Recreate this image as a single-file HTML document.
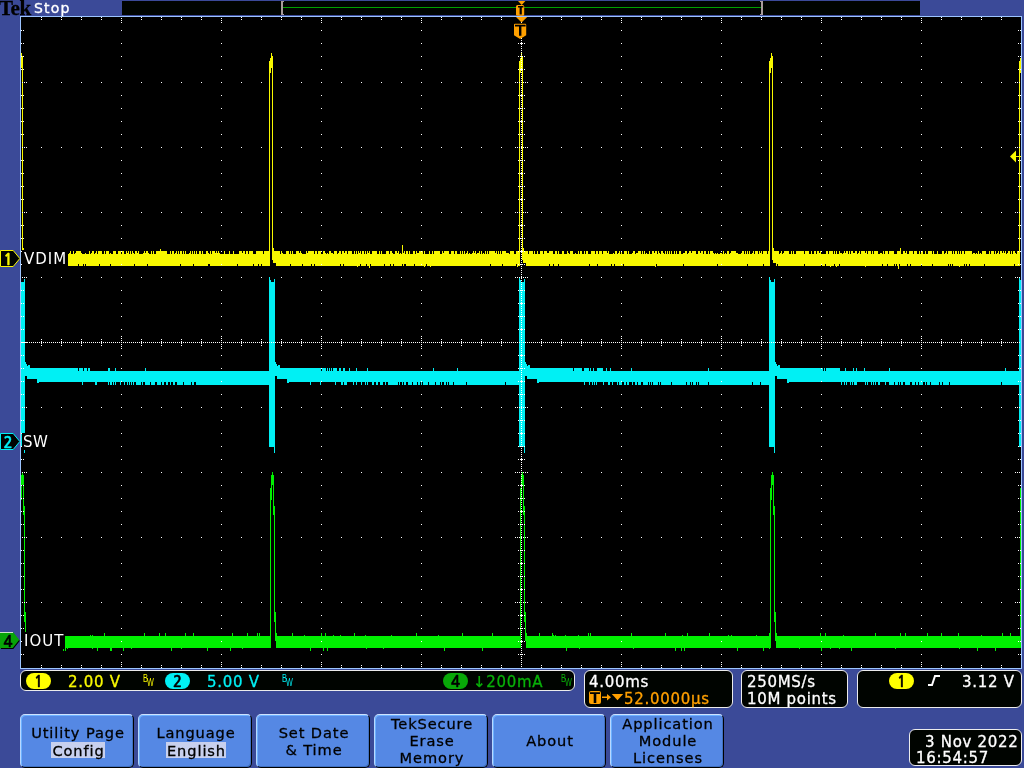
<!DOCTYPE html>
<html lang="en"><head><meta charset="utf-8"><title>Tek scope</title>
<style>
*{box-sizing:border-box;margin:0;padding:0}
html,body{width:1024px;height:768px;overflow:hidden;background:#3b4a98}
body{position:relative;font-family:"DejaVu Sans","Liberation Sans",sans-serif;font-size:15px;line-height:17px;color:#fff}
.abs{position:absolute}
#ov{position:absolute;left:0;top:0;width:1024px;height:768px;will-change:transform;transform:translateZ(0)}
#scr{position:absolute;left:0;top:0;width:1024px;height:768px}
.t{position:absolute;white-space:nowrap;letter-spacing:1px}
.lbl{position:absolute;background:#000;color:#fff;height:17px;line-height:17px;letter-spacing:1px;white-space:nowrap}
.box{position:absolute;background:#000400;border:1px solid #ececec;border-radius:6px}
.btn{position:absolute;top:714px;width:114px;height:54px;background:#5588e4;border-radius:5px;
 border-top:1px solid #cfe3ff;border-left:1px solid #b8d8ff;border-right:1px solid #000;border-bottom:1px solid #000;
 box-shadow:inset 1px 1px 0 #6cb0ff,inset -1px -1px 0 #4070c0;
 color:#000;text-align:center;font-size:14.6px;letter-spacing:0.9px;padding-left:2px;line-height:17px;white-space:nowrap;-webkit-text-stroke:0.3px #000}
.btn span{display:block}
.btn .hl{display:inline-block;font-weight:normal;background:#c8d0ee;padding:0 0 0 1px;height:16px;line-height:17px;margin-top:1px;vertical-align:top}
.r{line-height:13px;height:13px;letter-spacing:0.7px;-webkit-text-stroke:0.3px}
.mk{-webkit-text-stroke:0.4px;width:14px;text-align:center;letter-spacing:0;font-family:'NanumGothic','Liberation Sans',sans-serif;font-weight:bold;font-size:15px}
.pill{-webkit-text-stroke:0.4px #000;position:absolute;width:25px;height:16px;border-radius:8px;color:#000;text-align:center;line-height:17px;font-size:15px;letter-spacing:0;font-family:'NanumGothic','Liberation Sans',sans-serif;font-weight:bold}
</style></head><body>
<svg id="scr" width="1024" height="768" viewBox="0 0 1024 768" shape-rendering="crispEdges">
<rect x="122" y="1" width="798" height="14" fill="#000400"/>
<rect x="283" y="7" width="478" height="1" fill="#00a000"/>
<path fill="#a89c9c" d="M281 1h3v1h-1v12h1v1h-3z"/>
<path fill="#a89c9c" d="M763 1h-3v1h1v12h-1v1h3z"/>
<rect x="20" y="16" width="1002" height="653" fill="#9cc4ff"/>
<rect x="21" y="17" width="1000" height="651" fill="#000"/>
<path fill="#f8f800" d="M21 53h1v15h-1zM22 56h1v204h-1zM23 248h1v15h-1zM24 251h2v12h-2zM26 254h1v12h-1zM27 253h1v13h-1zM28 254h1v12h-1zM29 251h2v15h-2zM31 251h1v13h-1zM32 251h1v15h-1zM33 254h3v12h-3zM36 251h1v15h-1zM37 251h1v13h-1zM38 254h1v12h-1zM39 251h1v15h-1zM40 254h1v12h-1zM41 251h2v15h-2zM43 254h1v12h-1zM44 251h3v15h-3zM47 253h1v13h-1zM48 254h2v12h-2zM50 251h6v15h-6zM56 254h1v12h-1zM57 251h2v15h-2zM59 253h1v13h-1zM60 254h4v12h-4zM64 253h1v13h-1zM65 254h1v12h-1zM66 251h2v15h-2zM68 254h1v12h-1zM69 253h1v13h-1zM70 251h1v15h-1zM71 254h2v12h-2zM73 251h1v15h-1zM74 254h1v12h-1zM75 253h1v13h-1zM76 251h2v15h-2zM78 251h1v13h-1zM79 251h2v15h-2zM81 253h1v13h-1zM82 254h1v12h-1zM83 254h1v10h-1zM84 254h1v12h-1zM85 253h1v11h-1zM86 254h3v12h-3zM89 251h1v15h-1zM90 254h1v12h-1zM91 253h1v13h-1zM92 251h2v15h-2zM94 254h1v12h-1zM95 253h1v13h-1zM96 251h1v15h-1zM97 254h1v12h-1zM98 251h1v15h-1zM99 251h1v13h-1zM100 251h2v15h-2zM102 254h2v12h-2zM104 251h1v15h-1zM105 254h1v12h-1zM106 251h3v15h-3zM109 254h1v12h-1zM110 253h1v11h-1zM111 254h2v12h-2zM113 251h3v15h-3zM116 254h2v12h-2zM118 251h3v15h-3zM121 254h1v12h-1zM122 251h2v15h-2zM124 254h2v12h-2zM126 251h1v15h-1zM127 253h1v13h-1zM128 251h1v15h-1zM129 254h1v12h-1zM130 251h1v15h-1zM131 254h1v12h-1zM132 251h1v15h-1zM133 253h1v13h-1zM134 254h1v10h-1zM135 251h2v15h-2zM137 253h1v13h-1zM138 251h1v15h-1zM139 254h4v12h-4zM143 253h1v13h-1zM144 251h1v15h-1zM145 253h1v13h-1zM146 251h1v15h-1zM147 251h1v13h-1zM148 253h1v13h-1zM149 254h2v12h-2zM151 251h1v15h-1zM152 254h1v12h-1zM153 251h1v15h-1zM154 254h2v12h-2zM156 251h4v15h-4zM160 249h1v17h-1zM161 251h6v15h-6zM167 254h3v12h-3zM170 251h1v15h-1zM171 254h1v12h-1zM172 251h2v15h-2zM174 254h1v12h-1zM175 253h1v13h-1zM176 251h1v15h-1zM177 254h1v12h-1zM178 251h1v15h-1zM179 254h1v12h-1zM180 251h1v13h-1zM181 251h1v15h-1zM182 254h1v12h-1zM183 251h1v15h-1zM184 254h1v12h-1zM185 251h1v15h-1zM186 254h3v12h-3zM189 253h1v13h-1zM190 251h1v15h-1zM191 254h1v12h-1zM192 251h1v15h-1zM193 254h1v10h-1zM194 251h1v15h-1zM195 254h1v12h-1zM196 251h1v15h-1zM197 254h2v12h-2zM199 251h2v15h-2zM201 254h1v12h-1zM202 251h1v15h-1zM203 254h3v12h-3zM206 251h2v15h-2zM208 253h1v11h-1zM209 254h1v10h-1zM210 251h1v15h-1zM211 254h1v12h-1zM212 251h3v15h-3zM215 253h1v13h-1zM216 251h1v15h-1zM217 253h1v13h-1zM218 251h1v15h-1zM219 253h1v13h-1zM220 254h4v12h-4zM224 251h1v15h-1zM225 254h4v12h-4zM229 251h1v15h-1zM230 254h3v12h-3zM233 251h1v15h-1zM234 254h3v12h-3zM237 254h1v10h-1zM238 254h1v12h-1zM239 251h3v15h-3zM242 253h1v13h-1zM243 251h2v15h-2zM245 254h1v12h-1zM246 251h2v15h-2zM248 254h1v12h-1zM249 251h4v15h-4zM253 254h1v10h-1zM254 254h2v12h-2zM256 251h2v15h-2zM258 251h1v13h-1zM259 251h2v15h-2zM261 251h1v13h-1zM262 251h1v15h-1zM263 254h1v12h-1zM264 251h5v15h-5zM269 61h1v205h-1zM270 58h1v15h-1zM271 53h1v15h-1zM272 56h1v204h-1zM273 248h1v15h-1zM274 251h2v12h-2zM276 251h4v15h-4zM280 254h1v12h-1zM281 251h1v15h-1zM282 253h1v13h-1zM283 254h3v12h-3zM286 251h3v15h-3zM289 254h1v12h-1zM290 251h1v13h-1zM291 254h1v12h-1zM292 251h1v15h-1zM293 254h3v12h-3zM296 251h3v15h-3zM299 253h1v13h-1zM300 251h1v15h-1zM301 253h1v13h-1zM302 254h1v10h-1zM303 254h3v12h-3zM306 251h1v15h-1zM307 253h1v13h-1zM308 251h3v15h-3zM311 251h1v13h-1zM312 251h2v15h-2zM314 254h1v10h-1zM315 251h2v15h-2zM317 254h1v12h-1zM318 251h3v15h-3zM321 254h2v12h-2zM323 251h2v15h-2zM325 253h1v13h-1zM326 254h1v12h-1zM327 253h1v13h-1zM328 254h1v12h-1zM329 251h2v15h-2zM331 253h2v13h-2zM333 254h1v12h-1zM334 251h3v15h-3zM337 254h1v12h-1zM338 253h1v13h-1zM339 251h1v15h-1zM340 251h1v13h-1zM341 254h1v12h-1zM342 251h1v15h-1zM343 251h1v13h-1zM344 253h1v13h-1zM345 251h2v15h-2zM347 254h1v12h-1zM348 251h4v15h-4zM352 254h2v12h-2zM354 251h1v15h-1zM355 254h1v12h-1zM356 251h1v15h-1zM357 254h1v13h-1zM358 251h1v15h-1zM359 253h1v13h-1zM360 251h1v13h-1zM361 254h1v12h-1zM362 251h2v15h-2zM364 254h1v12h-1zM365 251h1v15h-1zM366 254h1v10h-1zM367 251h1v15h-1zM368 253h1v13h-1zM369 251h1v17h-1zM370 254h1v10h-1zM371 254h1v12h-1zM372 251h5v15h-5zM377 254h2v12h-2zM379 251h1v15h-1zM380 254h1v12h-1zM381 251h1v15h-1zM382 254h2v12h-2zM384 254h1v10h-1zM385 254h1v12h-1zM386 251h3v15h-3zM389 254h1v12h-1zM390 251h1v13h-1zM391 251h1v15h-1zM392 253h1v13h-1zM393 254h1v10h-1zM394 254h1v12h-1zM395 251h2v15h-2zM397 253h1v13h-1zM398 251h1v15h-1zM399 254h1v12h-1zM400 253h1v13h-1zM401 254h1v12h-1zM402 245h1v19h-1zM403 253h1v13h-1zM404 251h1v13h-1zM405 254h1v10h-1zM406 251h2v15h-2zM408 254h1v12h-1zM409 251h1v15h-1zM410 254h3v12h-3zM413 251h1v15h-1zM414 251h1v13h-1zM415 254h1v12h-1zM416 251h1v15h-1zM417 253h2v13h-2zM419 251h4v15h-4zM423 254h1v12h-1zM424 251h1v16h-1zM425 254h1v12h-1zM426 254h1v10h-1zM427 254h2v12h-2zM429 251h1v15h-1zM430 254h1v13h-1zM431 254h1v12h-1zM432 251h1v15h-1zM433 254h1v12h-1zM434 251h6v15h-6zM440 254h2v12h-2zM442 251h1v15h-1zM443 253h1v13h-1zM444 251h5v15h-5zM449 254h2v12h-2zM451 251h3v15h-3zM454 254h1v12h-1zM455 251h2v15h-2zM457 254h3v12h-3zM460 251h1v15h-1zM461 254h1v12h-1zM462 251h1v15h-1zM463 254h1v12h-1zM464 251h1v15h-1zM465 254h1v12h-1zM466 253h1v13h-1zM467 251h1v15h-1zM468 254h1v12h-1zM469 253h1v13h-1zM470 254h2v12h-2zM472 253h1v13h-1zM473 251h1v15h-1zM474 253h1v13h-1zM475 251h1v15h-1zM476 254h1v12h-1zM477 253h2v13h-2zM479 251h1v15h-1zM480 254h1v12h-1zM481 251h1v15h-1zM482 254h1v12h-1zM483 253h1v13h-1zM484 254h1v12h-1zM485 251h1v15h-1zM486 254h1v12h-1zM487 251h1v15h-1zM488 254h1v12h-1zM489 251h1v15h-1zM490 251h1v13h-1zM491 251h4v15h-4zM495 253h1v13h-1zM496 251h1v15h-1zM497 254h1v12h-1zM498 251h1v15h-1zM499 254h1v12h-1zM500 251h1v15h-1zM501 254h1v12h-1zM502 251h1v13h-1zM503 251h3v15h-3zM506 253h3v13h-3zM509 254h1v12h-1zM510 251h4v15h-4zM514 254h2v12h-2zM516 251h1v13h-1zM517 251h1v16h-1zM518 251h1v15h-1zM519 61h1v205h-1zM520 58h1v15h-1zM521 53h1v15h-1zM522 56h1v204h-1zM523 248h1v15h-1zM524 251h2v12h-2zM526 251h2v15h-2zM528 254h1v12h-1zM529 251h4v15h-4zM533 254h1v12h-1zM534 251h1v15h-1zM535 254h2v12h-2zM537 251h1v15h-1zM538 254h2v12h-2zM540 251h3v15h-3zM543 254h1v12h-1zM544 251h3v15h-3zM547 253h2v13h-2zM549 251h1v13h-1zM550 251h3v15h-3zM553 254h1v10h-1zM554 254h1v12h-1zM555 251h2v15h-2zM557 254h1v12h-1zM558 251h1v13h-1zM559 254h3v12h-3zM562 251h2v15h-2zM564 254h3v12h-3zM567 251h1v15h-1zM568 253h1v13h-1zM569 254h1v12h-1zM570 251h3v15h-3zM573 254h2v12h-2zM575 253h1v13h-1zM576 254h2v12h-2zM578 251h1v15h-1zM579 254h1v12h-1zM580 251h2v15h-2zM582 254h2v12h-2zM584 251h1v15h-1zM585 254h1v12h-1zM586 251h2v15h-2zM588 254h1v12h-1zM589 254h1v10h-1zM590 254h1v12h-1zM591 251h4v15h-4zM595 254h1v12h-1zM596 251h1v15h-1zM597 251h1v13h-1zM598 254h1v12h-1zM599 251h3v15h-3zM602 254h1v12h-1zM603 251h4v15h-4zM607 253h1v13h-1zM608 251h1v15h-1zM609 254h2v12h-2zM611 254h1v10h-1zM612 254h1v12h-1zM613 253h1v13h-1zM614 254h1v10h-1zM615 251h2v15h-2zM617 254h1v12h-1zM618 253h1v13h-1zM619 251h1v15h-1zM620 254h1v12h-1zM621 251h1v15h-1zM622 254h1v12h-1zM623 254h1v10h-1zM624 251h3v15h-3zM627 254h1v12h-1zM628 251h1v15h-1zM629 254h3v12h-3zM632 253h1v13h-1zM633 251h2v15h-2zM635 254h1v12h-1zM636 253h2v13h-2zM638 251h3v15h-3zM641 254h1v12h-1zM642 251h1v15h-1zM643 254h1v12h-1zM644 251h1v15h-1zM645 254h1v12h-1zM646 253h1v13h-1zM647 254h2v12h-2zM649 251h1v15h-1zM650 254h2v12h-2zM652 251h2v15h-2zM654 253h1v13h-1zM655 251h1v16h-1zM656 251h1v13h-1zM657 254h1v12h-1zM658 251h1v15h-1zM659 253h1v13h-1zM660 254h1v12h-1zM661 251h2v15h-2zM663 253h1v13h-1zM664 254h1v12h-1zM665 251h1v15h-1zM666 254h1v12h-1zM667 251h1v15h-1zM668 254h1v12h-1zM669 251h1v15h-1zM670 254h1v12h-1zM671 251h1v15h-1zM672 254h2v12h-2zM674 251h1v15h-1zM675 254h1v12h-1zM676 251h1v15h-1zM677 254h2v12h-2zM679 251h2v15h-2zM681 254h2v12h-2zM683 253h1v11h-1zM684 253h1v13h-1zM685 251h2v15h-2zM687 254h1v12h-1zM688 253h1v13h-1zM689 251h2v15h-2zM691 253h1v13h-1zM692 251h4v15h-4zM696 254h2v12h-2zM698 251h2v15h-2zM700 253h1v13h-1zM701 251h2v15h-2zM703 254h1v12h-1zM704 251h2v15h-2zM706 254h2v12h-2zM708 251h1v15h-1zM709 254h1v12h-1zM710 251h3v15h-3zM713 253h1v13h-1zM714 254h1v12h-1zM715 253h1v13h-1zM716 254h1v12h-1zM717 253h1v11h-1zM718 254h2v12h-2zM720 253h2v13h-2zM722 254h1v12h-1zM723 251h1v15h-1zM724 254h1v12h-1zM725 253h1v13h-1zM726 254h1v12h-1zM727 251h2v15h-2zM729 254h1v12h-1zM730 253h1v13h-1zM731 251h5v15h-5zM736 253h2v13h-2zM738 254h3v12h-3zM741 253h1v13h-1zM742 251h2v15h-2zM744 254h1v12h-1zM745 251h1v15h-1zM746 254h1v12h-1zM747 251h1v13h-1zM748 254h1v12h-1zM749 251h1v15h-1zM750 254h2v12h-2zM752 253h1v13h-1zM753 251h1v15h-1zM754 254h1v12h-1zM755 251h3v15h-3zM758 254h1v12h-1zM759 251h1v15h-1zM760 253h1v13h-1zM761 251h1v15h-1zM762 254h1v12h-1zM763 251h1v13h-1zM764 251h3v15h-3zM767 254h1v12h-1zM768 251h1v15h-1zM769 61h1v205h-1zM770 58h1v15h-1zM771 53h1v15h-1zM772 56h1v204h-1zM773 248h1v15h-1zM774 251h2v12h-2zM776 251h1v15h-1zM777 251h1v13h-1zM778 251h1v15h-1zM779 254h1v12h-1zM780 253h1v13h-1zM781 251h1v15h-1zM782 254h1v12h-1zM783 253h1v13h-1zM784 251h5v15h-5zM789 254h2v12h-2zM791 251h1v15h-1zM792 254h1v12h-1zM793 251h1v15h-1zM794 254h2v12h-2zM796 251h8v15h-8zM804 254h1v10h-1zM805 251h4v15h-4zM809 254h2v12h-2zM811 251h1v15h-1zM812 254h2v12h-2zM814 251h2v15h-2zM816 254h1v12h-1zM817 251h2v15h-2zM819 253h1v13h-1zM820 251h1v15h-1zM821 254h1v10h-1zM822 254h3v12h-3zM825 254h1v10h-1zM826 251h2v15h-2zM828 254h1v12h-1zM829 251h1v15h-1zM830 251h1v16h-1zM831 251h2v15h-2zM833 254h1v12h-1zM834 251h1v13h-1zM835 254h1v12h-1zM836 251h1v16h-1zM837 254h2v12h-2zM839 251h1v13h-1zM840 253h2v13h-2zM842 254h1v12h-1zM843 253h1v13h-1zM844 251h1v15h-1zM845 253h1v13h-1zM846 251h2v15h-2zM848 254h1v12h-1zM849 251h1v15h-1zM850 254h1v12h-1zM851 251h2v15h-2zM853 253h2v13h-2zM855 251h2v15h-2zM857 254h1v12h-1zM858 253h1v13h-1zM859 251h1v15h-1zM860 254h1v12h-1zM861 251h4v15h-4zM865 253h1v14h-1zM866 251h1v15h-1zM867 254h1v12h-1zM868 251h3v15h-3zM871 254h1v12h-1zM872 251h1v15h-1zM873 254h1v12h-1zM874 251h4v15h-4zM878 254h2v12h-2zM880 253h2v13h-2zM882 254h1v10h-1zM883 251h1v15h-1zM884 254h1v12h-1zM885 251h2v15h-2zM887 251h1v13h-1zM888 254h1v12h-1zM889 251h5v15h-5zM894 254h1v10h-1zM895 254h1v12h-1zM896 254h1v10h-1zM897 251h1v15h-1zM898 251h1v18h-1zM899 251h1v13h-1zM900 248h1v18h-1zM901 254h2v12h-2zM903 251h2v15h-2zM905 253h1v13h-1zM906 251h1v15h-1zM907 254h1v10h-1zM908 254h1v12h-1zM909 251h1v15h-1zM910 251h1v13h-1zM911 251h2v15h-2zM913 254h1v12h-1zM914 251h3v15h-3zM917 254h2v12h-2zM919 251h1v15h-1zM920 254h1v12h-1zM921 251h1v13h-1zM922 251h1v15h-1zM923 254h2v12h-2zM925 251h1v15h-1zM926 254h2v12h-2zM928 251h4v15h-4zM932 254h1v10h-1zM933 251h1v15h-1zM934 254h3v12h-3zM937 251h1v15h-1zM938 254h4v12h-4zM942 251h2v15h-2zM944 254h1v12h-1zM945 253h1v13h-1zM946 251h1v15h-1zM947 254h1v12h-1zM948 251h1v13h-1zM949 251h1v15h-1zM950 251h1v13h-1zM951 251h1v15h-1zM952 254h1v10h-1zM953 251h1v15h-1zM954 254h1v12h-1zM955 251h2v15h-2zM957 254h1v12h-1zM958 251h1v15h-1zM959 254h1v13h-1zM960 251h1v15h-1zM961 254h1v12h-1zM962 251h2v15h-2zM964 254h1v10h-1zM965 251h1v15h-1zM966 251h1v13h-1zM967 251h2v15h-2zM969 251h1v13h-1zM970 251h2v15h-2zM972 254h1v12h-1zM973 253h2v13h-2zM975 254h1v12h-1zM976 253h1v13h-1zM977 254h1v12h-1zM978 251h1v15h-1zM979 254h1v12h-1zM980 253h1v13h-1zM981 254h1v12h-1zM982 251h2v15h-2zM984 251h1v13h-1zM985 251h1v15h-1zM986 254h3v12h-3zM989 251h1v15h-1zM990 254h1v12h-1zM991 251h3v15h-3zM994 254h1v12h-1zM995 251h1v15h-1zM996 254h1v12h-1zM997 253h1v13h-1zM998 251h1v15h-1zM999 254h1v12h-1zM1000 251h2v15h-2zM1002 253h1v13h-1zM1003 251h1v15h-1zM1004 253h1v13h-1zM1005 251h1v15h-1zM1006 254h1v12h-1zM1007 253h1v13h-1zM1008 251h2v15h-2zM1010 254h1v12h-1zM1011 251h1v15h-1zM1012 254h1v12h-1zM1013 251h1v15h-1zM1014 251h1v13h-1zM1015 253h1v13h-1zM1016 254h1v12h-1zM1017 251h2v15h-2zM1019 61h1v205h-1zM1020 58h1v15h-1z"/>
<path fill="#00f0f4" d="M21 282h3v165h-3zM24 279h1v174h-1zM25 362h1v14h-1zM26 364h1v12h-1zM27 366h1v13h-1zM28 365h2v14h-2zM30 368h7v11h-7zM37 368h2v15h-2zM39 368h39v14h-39zM78 371h1v11h-1zM79 368h3v14h-3zM82 368h1v17h-1zM83 371h1v11h-1zM84 368h3v14h-3zM87 371h1v11h-1zM88 368h2v14h-2zM90 371h5v11h-5zM95 371h2v14h-2zM97 371h11v11h-11zM108 368h1v17h-1zM109 368h1v14h-1zM110 371h2v14h-2zM112 371h1v11h-1zM113 371h1v14h-1zM114 371h1v11h-1zM115 368h1v17h-1zM116 371h4v11h-4zM120 371h1v14h-1zM121 371h3v11h-3zM124 371h1v14h-1zM125 371h2v11h-2zM127 371h1v14h-1zM128 371h1v11h-1zM129 371h1v14h-1zM130 371h1v11h-1zM131 371h1v14h-1zM132 371h1v11h-1zM133 371h1v14h-1zM134 371h2v11h-2zM136 371h5v14h-5zM141 371h1v11h-1zM142 371h1v14h-1zM143 371h2v11h-2zM145 368h1v17h-1zM146 371h4v14h-4zM150 371h1v11h-1zM151 371h4v14h-4zM155 371h2v11h-2zM157 371h4v14h-4zM161 371h1v11h-1zM162 371h2v14h-2zM164 371h2v11h-2zM166 371h2v14h-2zM168 371h2v11h-2zM170 371h1v14h-1zM171 371h2v11h-2zM173 371h2v14h-2zM175 371h2v11h-2zM177 371h6v14h-6zM183 371h1v11h-1zM184 371h7v14h-7zM191 371h1v11h-1zM192 371h2v14h-2zM194 371h2v11h-2zM196 371h73v14h-73zM269 277h1v170h-1zM270 280h1v167h-1zM271 282h3v165h-3zM274 279h1v174h-1zM275 362h1v14h-1zM276 364h1v12h-1zM277 366h1v13h-1zM278 365h2v14h-2zM280 368h7v11h-7zM287 368h2v15h-2zM289 368h21v14h-21zM310 368h1v17h-1zM311 368h9v14h-9zM320 368h1v17h-1zM321 371h1v11h-1zM322 368h4v14h-4zM326 371h1v11h-1zM327 368h1v14h-1zM328 371h1v11h-1zM329 368h1v14h-1zM330 371h1v11h-1zM331 368h1v14h-1zM332 371h1v11h-1zM333 368h2v14h-2zM335 368h1v17h-1zM336 368h1v14h-1zM337 371h2v11h-2zM339 368h2v14h-2zM341 371h2v14h-2zM343 368h1v14h-1zM344 368h1v17h-1zM345 371h2v14h-2zM347 371h2v11h-2zM349 368h1v14h-1zM350 371h3v11h-3zM353 371h1v14h-1zM354 371h2v11h-2zM356 368h1v17h-1zM357 371h4v11h-4zM361 371h1v14h-1zM362 371h3v11h-3zM365 371h1v14h-1zM366 371h1v11h-1zM367 368h1v17h-1zM368 371h4v11h-4zM372 371h2v14h-2zM374 371h2v11h-2zM376 371h2v14h-2zM378 371h2v11h-2zM380 371h3v14h-3zM383 371h2v11h-2zM385 371h1v14h-1zM386 371h2v11h-2zM388 371h10v14h-10zM398 371h1v11h-1zM399 371h1v14h-1zM400 371h2v11h-2zM402 371h1v14h-1zM403 371h1v11h-1zM404 371h2v14h-2zM406 371h2v11h-2zM408 371h4v14h-4zM412 371h1v11h-1zM413 371h4v14h-4zM417 371h1v11h-1zM418 371h2v14h-2zM420 371h1v11h-1zM421 371h1v14h-1zM422 371h1v11h-1zM423 371h5v14h-5zM428 371h1v11h-1zM429 371h4v14h-4zM433 368h1v17h-1zM434 371h1v14h-1zM435 371h1v11h-1zM436 371h4v14h-4zM440 371h1v11h-1zM441 371h1v14h-1zM442 371h2v11h-2zM444 371h2v14h-2zM446 371h1v11h-1zM447 371h1v14h-1zM448 371h1v11h-1zM449 371h4v14h-4zM453 371h1v11h-1zM454 371h3v14h-3zM457 368h1v17h-1zM458 371h8v14h-8zM466 371h1v11h-1zM467 371h38v14h-38zM505 371h1v11h-1zM506 371h13v14h-13zM519 277h1v170h-1zM520 280h1v167h-1zM521 282h3v165h-3zM524 279h1v174h-1zM525 362h1v14h-1zM526 364h1v12h-1zM527 366h1v13h-1zM528 365h2v14h-2zM530 368h7v11h-7zM537 368h2v15h-2zM539 368h34v14h-34zM573 371h1v11h-1zM574 368h8v14h-8zM582 371h2v11h-2zM584 368h1v17h-1zM585 368h4v14h-4zM589 371h1v14h-1zM590 368h1v14h-1zM591 371h1v11h-1zM592 371h1v14h-1zM593 368h1v14h-1zM594 371h1v14h-1zM595 371h1v11h-1zM596 371h1v14h-1zM597 368h6v14h-6zM603 371h1v14h-1zM604 371h2v11h-2zM606 368h1v14h-1zM607 371h1v11h-1zM608 371h2v14h-2zM610 368h1v14h-1zM611 371h1v11h-1zM612 371h1v14h-1zM613 371h4v11h-4zM617 371h1v14h-1zM618 371h1v11h-1zM619 371h3v14h-3zM622 371h2v11h-2zM624 371h2v14h-2zM626 371h1v11h-1zM627 371h2v14h-2zM629 371h2v11h-2zM631 368h1v14h-1zM632 371h1v14h-1zM633 371h2v11h-2zM635 371h2v14h-2zM637 371h1v11h-1zM638 371h3v14h-3zM641 371h2v11h-2zM643 371h5v14h-5zM648 371h1v11h-1zM649 371h1v14h-1zM650 371h1v11h-1zM651 371h1v14h-1zM652 371h1v11h-1zM653 371h5v14h-5zM658 371h1v11h-1zM659 371h1v14h-1zM660 371h1v11h-1zM661 371h10v14h-10zM671 371h1v11h-1zM672 371h14v14h-14zM686 371h1v11h-1zM687 371h3v14h-3zM690 371h1v11h-1zM691 371h1v14h-1zM692 371h1v11h-1zM693 371h3v14h-3zM696 371h1v11h-1zM697 371h1v14h-1zM698 371h1v11h-1zM699 371h9v14h-9zM708 368h1v14h-1zM709 371h43v14h-43zM752 371h1v11h-1zM753 371h7v14h-7zM760 371h1v11h-1zM761 371h8v14h-8zM769 277h1v170h-1zM770 280h1v167h-1zM771 282h3v165h-3zM774 279h1v174h-1zM775 362h1v14h-1zM776 364h1v12h-1zM777 366h1v13h-1zM778 365h2v14h-2zM780 368h7v11h-7zM787 368h2v15h-2zM789 368h34v14h-34zM823 371h1v11h-1zM824 368h1v14h-1zM825 371h1v11h-1zM826 368h14v14h-14zM840 371h1v11h-1zM841 371h1v14h-1zM842 371h2v11h-2zM844 371h1v14h-1zM845 368h1v14h-1zM846 371h1v14h-1zM847 371h3v11h-3zM850 371h1v14h-1zM851 371h1v11h-1zM852 371h1v14h-1zM853 368h1v14h-1zM854 371h2v14h-2zM856 368h1v17h-1zM857 371h7v11h-7zM864 368h1v14h-1zM865 371h1v14h-1zM866 371h1v11h-1zM867 371h1v14h-1zM868 371h3v11h-3zM871 371h1v14h-1zM872 371h1v11h-1zM873 371h1v14h-1zM874 371h1v11h-1zM875 371h1v14h-1zM876 371h2v11h-2zM878 371h2v14h-2zM880 371h5v11h-5zM885 371h1v14h-1zM886 371h3v11h-3zM889 368h1v17h-1zM890 371h4v14h-4zM894 371h1v11h-1zM895 371h3v14h-3zM898 371h1v11h-1zM899 371h1v14h-1zM900 371h1v11h-1zM901 371h2v14h-2zM903 371h2v11h-2zM905 371h5v14h-5zM910 371h2v11h-2zM912 371h3v14h-3zM915 371h1v11h-1zM916 371h2v14h-2zM918 371h1v11h-1zM919 371h4v14h-4zM923 371h2v11h-2zM925 371h1v14h-1zM926 371h1v11h-1zM927 371h3v14h-3zM930 371h1v11h-1zM931 371h8v14h-8zM939 371h1v11h-1zM940 371h2v14h-2zM942 371h1v11h-1zM943 371h6v14h-6zM949 371h1v11h-1zM950 371h51v14h-51zM1001 371h1v11h-1zM1002 371h3v14h-3zM1005 368h1v17h-1zM1006 371h13v14h-13zM1019 277h1v170h-1zM1020 280h1v167h-1z"/>
<path fill="#00f000" d="M21 475h1v25h-1zM22 472h1v13h-1zM23 475h1v40h-1zM24 506h1v116h-1zM25 612h1v29h-1zM26 633h1v15h-1zM27 636h15v12h-15zM42 633h1v15h-1zM43 636h4v12h-4zM47 635h1v13h-1zM48 636h10v12h-10zM58 633h1v15h-1zM59 636h4v12h-4zM63 636h1v15h-1zM64 636h1v12h-1zM65 636h1v15h-1zM66 636h1v12h-1zM67 636h1v13h-1zM68 636h22v12h-22zM90 635h1v13h-1zM91 636h1v12h-1zM92 635h1v14h-1zM93 636h4v12h-4zM97 636h1v15h-1zM98 636h6v12h-6zM104 633h1v15h-1zM105 636h5v12h-5zM110 636h2v15h-2zM112 636h11v12h-11zM123 636h1v15h-1zM124 636h7v12h-7zM131 636h1v13h-1zM132 636h12v12h-12zM144 633h1v15h-1zM145 636h14v12h-14zM159 633h1v15h-1zM160 636h5v12h-5zM165 633h1v15h-1zM166 636h5v12h-5zM171 636h1v15h-1zM172 636h9v12h-9zM181 636h1v13h-1zM182 636h3v12h-3zM185 633h1v15h-1zM186 636h7v12h-7zM193 633h1v15h-1zM194 636h13v12h-13zM207 636h1v15h-1zM208 636h22v12h-22zM230 636h1v15h-1zM231 636h1v12h-1zM232 633h1v15h-1zM233 636h9v12h-9zM242 636h1v13h-1zM243 636h4v12h-4zM247 633h1v15h-1zM248 636h9v12h-9zM257 633h1v15h-1zM258 636h1v12h-1zM259 633h1v15h-1zM260 636h10v12h-10zM270 488h1v160h-1zM271 475h1v25h-1zM272 472h1v13h-1zM273 475h1v40h-1zM274 506h1v116h-1zM275 612h1v29h-1zM276 633h1v15h-1zM277 636h15v12h-15zM292 633h1v15h-1zM293 636h11v12h-11zM304 635h1v13h-1zM305 636h5v12h-5zM310 636h1v15h-1zM311 636h10v12h-10zM321 633h1v15h-1zM322 636h1v12h-1zM323 636h1v15h-1zM324 636h1v12h-1zM325 633h1v15h-1zM326 636h1v12h-1zM327 636h1v15h-1zM328 636h5v12h-5zM333 635h1v13h-1zM334 636h6v12h-6zM340 635h1v13h-1zM341 636h13v12h-13zM354 633h1v15h-1zM355 636h10v12h-10zM365 635h1v13h-1zM366 636h1v13h-1zM367 636h16v12h-16zM383 636h1v13h-1zM384 636h7v12h-7zM391 635h1v13h-1zM392 636h24v12h-24zM416 633h1v15h-1zM417 636h21v12h-21zM438 635h1v13h-1zM439 636h5v12h-5zM444 636h1v15h-1zM445 636h17v12h-17zM462 633h1v15h-1zM463 636h19v12h-19zM482 636h1v15h-1zM483 636h9v12h-9zM492 633h1v15h-1zM493 636h27v12h-27zM520 488h1v160h-1zM521 475h1v25h-1zM522 472h1v13h-1zM523 475h1v40h-1zM524 506h1v116h-1zM525 612h1v29h-1zM526 633h1v15h-1zM527 636h12v12h-12zM539 633h1v15h-1zM540 636h12v12h-12zM552 633h1v15h-1zM553 635h1v13h-1zM554 636h1v12h-1zM555 635h1v13h-1zM556 636h9v12h-9zM565 635h1v13h-1zM566 636h1v15h-1zM567 636h11v12h-11zM578 635h1v13h-1zM579 636h1v13h-1zM580 636h8v12h-8zM588 633h1v15h-1zM589 636h1v12h-1zM590 633h1v15h-1zM591 636h40v12h-40zM631 633h1v15h-1zM632 636h1v12h-1zM633 636h1v13h-1zM634 636h31v12h-31zM665 633h1v15h-1zM666 636h9v12h-9zM675 636h1v15h-1zM676 636h5v12h-5zM681 636h1v15h-1zM682 635h1v13h-1zM683 636h1v12h-1zM684 636h1v15h-1zM685 636h2v12h-2zM687 633h1v15h-1zM688 636h21v12h-21zM709 633h1v15h-1zM710 636h18v12h-18zM728 635h1v13h-1zM729 636h2v12h-2zM731 635h1v13h-1zM732 636h5v12h-5zM737 636h1v15h-1zM738 636h18v12h-18zM756 635h1v13h-1zM757 636h6v12h-6zM763 636h1v15h-1zM764 636h5v12h-5zM769 633h1v16h-1zM770 488h1v160h-1zM771 475h1v25h-1zM772 472h1v13h-1zM773 475h1v40h-1zM774 506h1v116h-1zM775 612h1v29h-1zM776 633h1v15h-1zM777 636h22v12h-22zM799 636h1v13h-1zM800 636h20v12h-20zM820 633h1v15h-1zM821 636h1v15h-1zM822 636h3v12h-3zM825 633h1v15h-1zM826 636h4v12h-4zM830 636h1v13h-1zM831 636h8v12h-8zM839 636h1v13h-1zM840 636h3v12h-3zM843 635h1v13h-1zM844 636h7v12h-7zM851 636h1v15h-1zM852 636h23v12h-23zM875 633h1v15h-1zM876 636h19v12h-19zM895 636h1v13h-1zM896 636h4v12h-4zM900 633h1v15h-1zM901 636h4v12h-4zM905 633h1v15h-1zM906 636h21v12h-21zM927 633h1v15h-1zM928 636h13v12h-13zM941 633h1v15h-1zM942 636h16v12h-16zM958 633h1v15h-1zM959 636h1v13h-1zM960 636h17v12h-17zM977 636h1v15h-1zM978 636h3v12h-3zM981 635h1v13h-1zM982 636h13v12h-13zM995 636h1v15h-1zM996 636h6v12h-6zM1002 633h1v15h-1zM1003 636h7v12h-7zM1010 633h1v15h-1zM1011 636h9v12h-9zM1020 488h1v160h-1z"/>
<path fill="#ffffff" d="M121 30h1v1h-1zM121 43h1v1h-1zM121 56h1v1h-1zM121 69h1v1h-1zM121 82h1v1h-1zM121 95h1v1h-1zM121 108h1v1h-1zM121 121h1v1h-1zM121 134h1v1h-1zM121 147h1v1h-1zM121 160h1v1h-1zM121 173h1v1h-1zM121 186h1v1h-1zM121 199h1v1h-1zM121 212h1v1h-1zM121 225h1v1h-1zM121 238h1v1h-1zM121 251h1v1h-1zM121 264h1v1h-1zM121 277h1v1h-1zM121 290h1v1h-1zM121 303h1v1h-1zM121 316h1v1h-1zM121 329h1v1h-1zM121 342h1v1h-1zM121 355h1v1h-1zM121 368h1v1h-1zM121 381h1v1h-1zM121 394h1v1h-1zM121 407h1v1h-1zM121 420h1v1h-1zM121 433h1v1h-1zM121 446h1v1h-1zM121 459h1v1h-1zM121 472h1v1h-1zM121 485h1v1h-1zM121 498h1v1h-1zM121 511h1v1h-1zM121 524h1v1h-1zM121 537h1v1h-1zM121 550h1v1h-1zM121 563h1v1h-1zM121 576h1v1h-1zM121 589h1v1h-1zM121 602h1v1h-1zM121 615h1v1h-1zM121 628h1v1h-1zM121 641h1v1h-1zM121 654h1v1h-1zM221 30h1v1h-1zM221 43h1v1h-1zM221 56h1v1h-1zM221 69h1v1h-1zM221 82h1v1h-1zM221 95h1v1h-1zM221 108h1v1h-1zM221 121h1v1h-1zM221 134h1v1h-1zM221 147h1v1h-1zM221 160h1v1h-1zM221 173h1v1h-1zM221 186h1v1h-1zM221 199h1v1h-1zM221 212h1v1h-1zM221 225h1v1h-1zM221 238h1v1h-1zM221 251h1v1h-1zM221 264h1v1h-1zM221 277h1v1h-1zM221 290h1v1h-1zM221 303h1v1h-1zM221 316h1v1h-1zM221 329h1v1h-1zM221 342h1v1h-1zM221 355h1v1h-1zM221 368h1v1h-1zM221 381h1v1h-1zM221 394h1v1h-1zM221 407h1v1h-1zM221 420h1v1h-1zM221 433h1v1h-1zM221 446h1v1h-1zM221 459h1v1h-1zM221 472h1v1h-1zM221 485h1v1h-1zM221 498h1v1h-1zM221 511h1v1h-1zM221 524h1v1h-1zM221 537h1v1h-1zM221 550h1v1h-1zM221 563h1v1h-1zM221 576h1v1h-1zM221 589h1v1h-1zM221 602h1v1h-1zM221 615h1v1h-1zM221 628h1v1h-1zM221 641h1v1h-1zM221 654h1v1h-1zM321 30h1v1h-1zM321 43h1v1h-1zM321 56h1v1h-1zM321 69h1v1h-1zM321 82h1v1h-1zM321 95h1v1h-1zM321 108h1v1h-1zM321 121h1v1h-1zM321 134h1v1h-1zM321 147h1v1h-1zM321 160h1v1h-1zM321 173h1v1h-1zM321 186h1v1h-1zM321 199h1v1h-1zM321 212h1v1h-1zM321 225h1v1h-1zM321 238h1v1h-1zM321 251h1v1h-1zM321 264h1v1h-1zM321 277h1v1h-1zM321 290h1v1h-1zM321 303h1v1h-1zM321 316h1v1h-1zM321 329h1v1h-1zM321 342h1v1h-1zM321 355h1v1h-1zM321 368h1v1h-1zM321 381h1v1h-1zM321 394h1v1h-1zM321 407h1v1h-1zM321 420h1v1h-1zM321 433h1v1h-1zM321 446h1v1h-1zM321 459h1v1h-1zM321 472h1v1h-1zM321 485h1v1h-1zM321 498h1v1h-1zM321 511h1v1h-1zM321 524h1v1h-1zM321 537h1v1h-1zM321 550h1v1h-1zM321 563h1v1h-1zM321 576h1v1h-1zM321 589h1v1h-1zM321 602h1v1h-1zM321 615h1v1h-1zM321 628h1v1h-1zM321 641h1v1h-1zM321 654h1v1h-1zM421 30h1v1h-1zM421 43h1v1h-1zM421 56h1v1h-1zM421 69h1v1h-1zM421 82h1v1h-1zM421 95h1v1h-1zM421 108h1v1h-1zM421 121h1v1h-1zM421 134h1v1h-1zM421 147h1v1h-1zM421 160h1v1h-1zM421 173h1v1h-1zM421 186h1v1h-1zM421 199h1v1h-1zM421 212h1v1h-1zM421 225h1v1h-1zM421 238h1v1h-1zM421 251h1v1h-1zM421 264h1v1h-1zM421 277h1v1h-1zM421 290h1v1h-1zM421 303h1v1h-1zM421 316h1v1h-1zM421 329h1v1h-1zM421 342h1v1h-1zM421 355h1v1h-1zM421 368h1v1h-1zM421 381h1v1h-1zM421 394h1v1h-1zM421 407h1v1h-1zM421 420h1v1h-1zM421 433h1v1h-1zM421 446h1v1h-1zM421 459h1v1h-1zM421 472h1v1h-1zM421 485h1v1h-1zM421 498h1v1h-1zM421 511h1v1h-1zM421 524h1v1h-1zM421 537h1v1h-1zM421 550h1v1h-1zM421 563h1v1h-1zM421 576h1v1h-1zM421 589h1v1h-1zM421 602h1v1h-1zM421 615h1v1h-1zM421 628h1v1h-1zM421 641h1v1h-1zM421 654h1v1h-1zM621 30h1v1h-1zM621 43h1v1h-1zM621 56h1v1h-1zM621 69h1v1h-1zM621 82h1v1h-1zM621 95h1v1h-1zM621 108h1v1h-1zM621 121h1v1h-1zM621 134h1v1h-1zM621 147h1v1h-1zM621 160h1v1h-1zM621 173h1v1h-1zM621 186h1v1h-1zM621 199h1v1h-1zM621 212h1v1h-1zM621 225h1v1h-1zM621 238h1v1h-1zM621 251h1v1h-1zM621 264h1v1h-1zM621 277h1v1h-1zM621 290h1v1h-1zM621 303h1v1h-1zM621 316h1v1h-1zM621 329h1v1h-1zM621 342h1v1h-1zM621 355h1v1h-1zM621 368h1v1h-1zM621 381h1v1h-1zM621 394h1v1h-1zM621 407h1v1h-1zM621 420h1v1h-1zM621 433h1v1h-1zM621 446h1v1h-1zM621 459h1v1h-1zM621 472h1v1h-1zM621 485h1v1h-1zM621 498h1v1h-1zM621 511h1v1h-1zM621 524h1v1h-1zM621 537h1v1h-1zM621 550h1v1h-1zM621 563h1v1h-1zM621 576h1v1h-1zM621 589h1v1h-1zM621 602h1v1h-1zM621 615h1v1h-1zM621 628h1v1h-1zM621 641h1v1h-1zM621 654h1v1h-1zM721 30h1v1h-1zM721 43h1v1h-1zM721 56h1v1h-1zM721 69h1v1h-1zM721 82h1v1h-1zM721 95h1v1h-1zM721 108h1v1h-1zM721 121h1v1h-1zM721 134h1v1h-1zM721 147h1v1h-1zM721 160h1v1h-1zM721 173h1v1h-1zM721 186h1v1h-1zM721 199h1v1h-1zM721 212h1v1h-1zM721 225h1v1h-1zM721 238h1v1h-1zM721 251h1v1h-1zM721 264h1v1h-1zM721 277h1v1h-1zM721 290h1v1h-1zM721 303h1v1h-1zM721 316h1v1h-1zM721 329h1v1h-1zM721 342h1v1h-1zM721 355h1v1h-1zM721 368h1v1h-1zM721 381h1v1h-1zM721 394h1v1h-1zM721 407h1v1h-1zM721 420h1v1h-1zM721 433h1v1h-1zM721 446h1v1h-1zM721 459h1v1h-1zM721 472h1v1h-1zM721 485h1v1h-1zM721 498h1v1h-1zM721 511h1v1h-1zM721 524h1v1h-1zM721 537h1v1h-1zM721 550h1v1h-1zM721 563h1v1h-1zM721 576h1v1h-1zM721 589h1v1h-1zM721 602h1v1h-1zM721 615h1v1h-1zM721 628h1v1h-1zM721 641h1v1h-1zM721 654h1v1h-1zM821 30h1v1h-1zM821 43h1v1h-1zM821 56h1v1h-1zM821 69h1v1h-1zM821 82h1v1h-1zM821 95h1v1h-1zM821 108h1v1h-1zM821 121h1v1h-1zM821 134h1v1h-1zM821 147h1v1h-1zM821 160h1v1h-1zM821 173h1v1h-1zM821 186h1v1h-1zM821 199h1v1h-1zM821 212h1v1h-1zM821 225h1v1h-1zM821 238h1v1h-1zM821 251h1v1h-1zM821 264h1v1h-1zM821 277h1v1h-1zM821 290h1v1h-1zM821 303h1v1h-1zM821 316h1v1h-1zM821 329h1v1h-1zM821 342h1v1h-1zM821 355h1v1h-1zM821 368h1v1h-1zM821 381h1v1h-1zM821 394h1v1h-1zM821 407h1v1h-1zM821 420h1v1h-1zM821 433h1v1h-1zM821 446h1v1h-1zM821 459h1v1h-1zM821 472h1v1h-1zM821 485h1v1h-1zM821 498h1v1h-1zM821 511h1v1h-1zM821 524h1v1h-1zM821 537h1v1h-1zM821 550h1v1h-1zM821 563h1v1h-1zM821 576h1v1h-1zM821 589h1v1h-1zM821 602h1v1h-1zM821 615h1v1h-1zM821 628h1v1h-1zM821 641h1v1h-1zM821 654h1v1h-1zM921 30h1v1h-1zM921 43h1v1h-1zM921 56h1v1h-1zM921 69h1v1h-1zM921 82h1v1h-1zM921 95h1v1h-1zM921 108h1v1h-1zM921 121h1v1h-1zM921 134h1v1h-1zM921 147h1v1h-1zM921 160h1v1h-1zM921 173h1v1h-1zM921 186h1v1h-1zM921 199h1v1h-1zM921 212h1v1h-1zM921 225h1v1h-1zM921 238h1v1h-1zM921 251h1v1h-1zM921 264h1v1h-1zM921 277h1v1h-1zM921 290h1v1h-1zM921 303h1v1h-1zM921 316h1v1h-1zM921 329h1v1h-1zM921 342h1v1h-1zM921 355h1v1h-1zM921 368h1v1h-1zM921 381h1v1h-1zM921 394h1v1h-1zM921 407h1v1h-1zM921 420h1v1h-1zM921 433h1v1h-1zM921 446h1v1h-1zM921 459h1v1h-1zM921 472h1v1h-1zM921 485h1v1h-1zM921 498h1v1h-1zM921 511h1v1h-1zM921 524h1v1h-1zM921 537h1v1h-1zM921 550h1v1h-1zM921 563h1v1h-1zM921 576h1v1h-1zM921 589h1v1h-1zM921 602h1v1h-1zM921 615h1v1h-1zM921 628h1v1h-1zM921 641h1v1h-1zM921 654h1v1h-1zM41 82h1v1h-1zM61 82h1v1h-1zM81 82h1v1h-1zM101 82h1v1h-1zM121 82h1v1h-1zM141 82h1v1h-1zM161 82h1v1h-1zM181 82h1v1h-1zM201 82h1v1h-1zM221 82h1v1h-1zM241 82h1v1h-1zM261 82h1v1h-1zM281 82h1v1h-1zM301 82h1v1h-1zM321 82h1v1h-1zM341 82h1v1h-1zM361 82h1v1h-1zM381 82h1v1h-1zM401 82h1v1h-1zM421 82h1v1h-1zM441 82h1v1h-1zM461 82h1v1h-1zM481 82h1v1h-1zM501 82h1v1h-1zM521 82h1v1h-1zM541 82h1v1h-1zM561 82h1v1h-1zM581 82h1v1h-1zM601 82h1v1h-1zM621 82h1v1h-1zM641 82h1v1h-1zM661 82h1v1h-1zM681 82h1v1h-1zM701 82h1v1h-1zM721 82h1v1h-1zM741 82h1v1h-1zM761 82h1v1h-1zM781 82h1v1h-1zM801 82h1v1h-1zM821 82h1v1h-1zM841 82h1v1h-1zM861 82h1v1h-1zM881 82h1v1h-1zM901 82h1v1h-1zM921 82h1v1h-1zM941 82h1v1h-1zM961 82h1v1h-1zM981 82h1v1h-1zM1001 82h1v1h-1zM41 147h1v1h-1zM61 147h1v1h-1zM81 147h1v1h-1zM101 147h1v1h-1zM121 147h1v1h-1zM141 147h1v1h-1zM161 147h1v1h-1zM181 147h1v1h-1zM201 147h1v1h-1zM221 147h1v1h-1zM241 147h1v1h-1zM261 147h1v1h-1zM281 147h1v1h-1zM301 147h1v1h-1zM321 147h1v1h-1zM341 147h1v1h-1zM361 147h1v1h-1zM381 147h1v1h-1zM401 147h1v1h-1zM421 147h1v1h-1zM441 147h1v1h-1zM461 147h1v1h-1zM481 147h1v1h-1zM501 147h1v1h-1zM521 147h1v1h-1zM541 147h1v1h-1zM561 147h1v1h-1zM581 147h1v1h-1zM601 147h1v1h-1zM621 147h1v1h-1zM641 147h1v1h-1zM661 147h1v1h-1zM681 147h1v1h-1zM701 147h1v1h-1zM721 147h1v1h-1zM741 147h1v1h-1zM761 147h1v1h-1zM781 147h1v1h-1zM801 147h1v1h-1zM821 147h1v1h-1zM841 147h1v1h-1zM861 147h1v1h-1zM881 147h1v1h-1zM901 147h1v1h-1zM921 147h1v1h-1zM941 147h1v1h-1zM961 147h1v1h-1zM981 147h1v1h-1zM1001 147h1v1h-1zM41 212h1v1h-1zM61 212h1v1h-1zM81 212h1v1h-1zM101 212h1v1h-1zM121 212h1v1h-1zM141 212h1v1h-1zM161 212h1v1h-1zM181 212h1v1h-1zM201 212h1v1h-1zM221 212h1v1h-1zM241 212h1v1h-1zM261 212h1v1h-1zM281 212h1v1h-1zM301 212h1v1h-1zM321 212h1v1h-1zM341 212h1v1h-1zM361 212h1v1h-1zM381 212h1v1h-1zM401 212h1v1h-1zM421 212h1v1h-1zM441 212h1v1h-1zM461 212h1v1h-1zM481 212h1v1h-1zM501 212h1v1h-1zM521 212h1v1h-1zM541 212h1v1h-1zM561 212h1v1h-1zM581 212h1v1h-1zM601 212h1v1h-1zM621 212h1v1h-1zM641 212h1v1h-1zM661 212h1v1h-1zM681 212h1v1h-1zM701 212h1v1h-1zM721 212h1v1h-1zM741 212h1v1h-1zM761 212h1v1h-1zM781 212h1v1h-1zM801 212h1v1h-1zM821 212h1v1h-1zM841 212h1v1h-1zM861 212h1v1h-1zM881 212h1v1h-1zM901 212h1v1h-1zM921 212h1v1h-1zM941 212h1v1h-1zM961 212h1v1h-1zM981 212h1v1h-1zM1001 212h1v1h-1zM41 277h1v1h-1zM61 277h1v1h-1zM81 277h1v1h-1zM101 277h1v1h-1zM121 277h1v1h-1zM141 277h1v1h-1zM161 277h1v1h-1zM181 277h1v1h-1zM201 277h1v1h-1zM221 277h1v1h-1zM241 277h1v1h-1zM261 277h1v1h-1zM281 277h1v1h-1zM301 277h1v1h-1zM321 277h1v1h-1zM341 277h1v1h-1zM361 277h1v1h-1zM381 277h1v1h-1zM401 277h1v1h-1zM421 277h1v1h-1zM441 277h1v1h-1zM461 277h1v1h-1zM481 277h1v1h-1zM501 277h1v1h-1zM521 277h1v1h-1zM541 277h1v1h-1zM561 277h1v1h-1zM581 277h1v1h-1zM601 277h1v1h-1zM621 277h1v1h-1zM641 277h1v1h-1zM661 277h1v1h-1zM681 277h1v1h-1zM701 277h1v1h-1zM721 277h1v1h-1zM741 277h1v1h-1zM761 277h1v1h-1zM781 277h1v1h-1zM801 277h1v1h-1zM821 277h1v1h-1zM841 277h1v1h-1zM861 277h1v1h-1zM881 277h1v1h-1zM901 277h1v1h-1zM921 277h1v1h-1zM941 277h1v1h-1zM961 277h1v1h-1zM981 277h1v1h-1zM1001 277h1v1h-1zM41 407h1v1h-1zM61 407h1v1h-1zM81 407h1v1h-1zM101 407h1v1h-1zM121 407h1v1h-1zM141 407h1v1h-1zM161 407h1v1h-1zM181 407h1v1h-1zM201 407h1v1h-1zM221 407h1v1h-1zM241 407h1v1h-1zM261 407h1v1h-1zM281 407h1v1h-1zM301 407h1v1h-1zM321 407h1v1h-1zM341 407h1v1h-1zM361 407h1v1h-1zM381 407h1v1h-1zM401 407h1v1h-1zM421 407h1v1h-1zM441 407h1v1h-1zM461 407h1v1h-1zM481 407h1v1h-1zM501 407h1v1h-1zM521 407h1v1h-1zM541 407h1v1h-1zM561 407h1v1h-1zM581 407h1v1h-1zM601 407h1v1h-1zM621 407h1v1h-1zM641 407h1v1h-1zM661 407h1v1h-1zM681 407h1v1h-1zM701 407h1v1h-1zM721 407h1v1h-1zM741 407h1v1h-1zM761 407h1v1h-1zM781 407h1v1h-1zM801 407h1v1h-1zM821 407h1v1h-1zM841 407h1v1h-1zM861 407h1v1h-1zM881 407h1v1h-1zM901 407h1v1h-1zM921 407h1v1h-1zM941 407h1v1h-1zM961 407h1v1h-1zM981 407h1v1h-1zM1001 407h1v1h-1zM41 472h1v1h-1zM61 472h1v1h-1zM81 472h1v1h-1zM101 472h1v1h-1zM121 472h1v1h-1zM141 472h1v1h-1zM161 472h1v1h-1zM181 472h1v1h-1zM201 472h1v1h-1zM221 472h1v1h-1zM241 472h1v1h-1zM261 472h1v1h-1zM281 472h1v1h-1zM301 472h1v1h-1zM321 472h1v1h-1zM341 472h1v1h-1zM361 472h1v1h-1zM381 472h1v1h-1zM401 472h1v1h-1zM421 472h1v1h-1zM441 472h1v1h-1zM461 472h1v1h-1zM481 472h1v1h-1zM501 472h1v1h-1zM521 472h1v1h-1zM541 472h1v1h-1zM561 472h1v1h-1zM581 472h1v1h-1zM601 472h1v1h-1zM621 472h1v1h-1zM641 472h1v1h-1zM661 472h1v1h-1zM681 472h1v1h-1zM701 472h1v1h-1zM721 472h1v1h-1zM741 472h1v1h-1zM761 472h1v1h-1zM781 472h1v1h-1zM801 472h1v1h-1zM821 472h1v1h-1zM841 472h1v1h-1zM861 472h1v1h-1zM881 472h1v1h-1zM901 472h1v1h-1zM921 472h1v1h-1zM941 472h1v1h-1zM961 472h1v1h-1zM981 472h1v1h-1zM1001 472h1v1h-1zM41 537h1v1h-1zM61 537h1v1h-1zM81 537h1v1h-1zM101 537h1v1h-1zM121 537h1v1h-1zM141 537h1v1h-1zM161 537h1v1h-1zM181 537h1v1h-1zM201 537h1v1h-1zM221 537h1v1h-1zM241 537h1v1h-1zM261 537h1v1h-1zM281 537h1v1h-1zM301 537h1v1h-1zM321 537h1v1h-1zM341 537h1v1h-1zM361 537h1v1h-1zM381 537h1v1h-1zM401 537h1v1h-1zM421 537h1v1h-1zM441 537h1v1h-1zM461 537h1v1h-1zM481 537h1v1h-1zM501 537h1v1h-1zM521 537h1v1h-1zM541 537h1v1h-1zM561 537h1v1h-1zM581 537h1v1h-1zM601 537h1v1h-1zM621 537h1v1h-1zM641 537h1v1h-1zM661 537h1v1h-1zM681 537h1v1h-1zM701 537h1v1h-1zM721 537h1v1h-1zM741 537h1v1h-1zM761 537h1v1h-1zM781 537h1v1h-1zM801 537h1v1h-1zM821 537h1v1h-1zM841 537h1v1h-1zM861 537h1v1h-1zM881 537h1v1h-1zM901 537h1v1h-1zM921 537h1v1h-1zM941 537h1v1h-1zM961 537h1v1h-1zM981 537h1v1h-1zM1001 537h1v1h-1zM41 602h1v1h-1zM61 602h1v1h-1zM81 602h1v1h-1zM101 602h1v1h-1zM121 602h1v1h-1zM141 602h1v1h-1zM161 602h1v1h-1zM181 602h1v1h-1zM201 602h1v1h-1zM221 602h1v1h-1zM241 602h1v1h-1zM261 602h1v1h-1zM281 602h1v1h-1zM301 602h1v1h-1zM321 602h1v1h-1zM341 602h1v1h-1zM361 602h1v1h-1zM381 602h1v1h-1zM401 602h1v1h-1zM421 602h1v1h-1zM441 602h1v1h-1zM461 602h1v1h-1zM481 602h1v1h-1zM501 602h1v1h-1zM521 602h1v1h-1zM541 602h1v1h-1zM561 602h1v1h-1zM581 602h1v1h-1zM601 602h1v1h-1zM621 602h1v1h-1zM641 602h1v1h-1zM661 602h1v1h-1zM681 602h1v1h-1zM701 602h1v1h-1zM721 602h1v1h-1zM741 602h1v1h-1zM761 602h1v1h-1zM781 602h1v1h-1zM801 602h1v1h-1zM821 602h1v1h-1zM841 602h1v1h-1zM861 602h1v1h-1zM881 602h1v1h-1zM901 602h1v1h-1zM921 602h1v1h-1zM941 602h1v1h-1zM961 602h1v1h-1zM981 602h1v1h-1zM1001 602h1v1h-1zM21 342h1v1h-1zM23 342h1v1h-1zM25 342h1v1h-1zM27 342h1v1h-1zM29 342h1v1h-1zM31 342h1v1h-1zM33 342h1v1h-1zM35 342h1v1h-1zM37 342h1v1h-1zM39 342h1v1h-1zM41 342h1v1h-1zM43 342h1v1h-1zM45 342h1v1h-1zM47 342h1v1h-1zM49 342h1v1h-1zM51 342h1v1h-1zM53 342h1v1h-1zM55 342h1v1h-1zM57 342h1v1h-1zM59 342h1v1h-1zM61 342h1v1h-1zM63 342h1v1h-1zM65 342h1v1h-1zM67 342h1v1h-1zM69 342h1v1h-1zM71 342h1v1h-1zM73 342h1v1h-1zM75 342h1v1h-1zM77 342h1v1h-1zM79 342h1v1h-1zM81 342h1v1h-1zM83 342h1v1h-1zM85 342h1v1h-1zM87 342h1v1h-1zM89 342h1v1h-1zM91 342h1v1h-1zM93 342h1v1h-1zM95 342h1v1h-1zM97 342h1v1h-1zM99 342h1v1h-1zM101 342h1v1h-1zM103 342h1v1h-1zM105 342h1v1h-1zM107 342h1v1h-1zM109 342h1v1h-1zM111 342h1v1h-1zM113 342h1v1h-1zM115 342h1v1h-1zM117 342h1v1h-1zM119 342h1v1h-1zM121 342h1v1h-1zM123 342h1v1h-1zM125 342h1v1h-1zM127 342h1v1h-1zM129 342h1v1h-1zM131 342h1v1h-1zM133 342h1v1h-1zM135 342h1v1h-1zM137 342h1v1h-1zM139 342h1v1h-1zM141 342h1v1h-1zM143 342h1v1h-1zM145 342h1v1h-1zM147 342h1v1h-1zM149 342h1v1h-1zM151 342h1v1h-1zM153 342h1v1h-1zM155 342h1v1h-1zM157 342h1v1h-1zM159 342h1v1h-1zM161 342h1v1h-1zM163 342h1v1h-1zM165 342h1v1h-1zM167 342h1v1h-1zM169 342h1v1h-1zM171 342h1v1h-1zM173 342h1v1h-1zM175 342h1v1h-1zM177 342h1v1h-1zM179 342h1v1h-1zM181 342h1v1h-1zM183 342h1v1h-1zM185 342h1v1h-1zM187 342h1v1h-1zM189 342h1v1h-1zM191 342h1v1h-1zM193 342h1v1h-1zM195 342h1v1h-1zM197 342h1v1h-1zM199 342h1v1h-1zM201 342h1v1h-1zM203 342h1v1h-1zM205 342h1v1h-1zM207 342h1v1h-1zM209 342h1v1h-1zM211 342h1v1h-1zM213 342h1v1h-1zM215 342h1v1h-1zM217 342h1v1h-1zM219 342h1v1h-1zM221 342h1v1h-1zM223 342h1v1h-1zM225 342h1v1h-1zM227 342h1v1h-1zM229 342h1v1h-1zM231 342h1v1h-1zM233 342h1v1h-1zM235 342h1v1h-1zM237 342h1v1h-1zM239 342h1v1h-1zM241 342h1v1h-1zM243 342h1v1h-1zM245 342h1v1h-1zM247 342h1v1h-1zM249 342h1v1h-1zM251 342h1v1h-1zM253 342h1v1h-1zM255 342h1v1h-1zM257 342h1v1h-1zM259 342h1v1h-1zM261 342h1v1h-1zM263 342h1v1h-1zM265 342h1v1h-1zM267 342h1v1h-1zM269 342h1v1h-1zM271 342h1v1h-1zM273 342h1v1h-1zM275 342h1v1h-1zM277 342h1v1h-1zM279 342h1v1h-1zM281 342h1v1h-1zM283 342h1v1h-1zM285 342h1v1h-1zM287 342h1v1h-1zM289 342h1v1h-1zM291 342h1v1h-1zM293 342h1v1h-1zM295 342h1v1h-1zM297 342h1v1h-1zM299 342h1v1h-1zM301 342h1v1h-1zM303 342h1v1h-1zM305 342h1v1h-1zM307 342h1v1h-1zM309 342h1v1h-1zM311 342h1v1h-1zM313 342h1v1h-1zM315 342h1v1h-1zM317 342h1v1h-1zM319 342h1v1h-1zM321 342h1v1h-1zM323 342h1v1h-1zM325 342h1v1h-1zM327 342h1v1h-1zM329 342h1v1h-1zM331 342h1v1h-1zM333 342h1v1h-1zM335 342h1v1h-1zM337 342h1v1h-1zM339 342h1v1h-1zM341 342h1v1h-1zM343 342h1v1h-1zM345 342h1v1h-1zM347 342h1v1h-1zM349 342h1v1h-1zM351 342h1v1h-1zM353 342h1v1h-1zM355 342h1v1h-1zM357 342h1v1h-1zM359 342h1v1h-1zM361 342h1v1h-1zM363 342h1v1h-1zM365 342h1v1h-1zM367 342h1v1h-1zM369 342h1v1h-1zM371 342h1v1h-1zM373 342h1v1h-1zM375 342h1v1h-1zM377 342h1v1h-1zM379 342h1v1h-1zM381 342h1v1h-1zM383 342h1v1h-1zM385 342h1v1h-1zM387 342h1v1h-1zM389 342h1v1h-1zM391 342h1v1h-1zM393 342h1v1h-1zM395 342h1v1h-1zM397 342h1v1h-1zM399 342h1v1h-1zM401 342h1v1h-1zM403 342h1v1h-1zM405 342h1v1h-1zM407 342h1v1h-1zM409 342h1v1h-1zM411 342h1v1h-1zM413 342h1v1h-1zM415 342h1v1h-1zM417 342h1v1h-1zM419 342h1v1h-1zM421 342h1v1h-1zM423 342h1v1h-1zM425 342h1v1h-1zM427 342h1v1h-1zM429 342h1v1h-1zM431 342h1v1h-1zM433 342h1v1h-1zM435 342h1v1h-1zM437 342h1v1h-1zM439 342h1v1h-1zM441 342h1v1h-1zM443 342h1v1h-1zM445 342h1v1h-1zM447 342h1v1h-1zM449 342h1v1h-1zM451 342h1v1h-1zM453 342h1v1h-1zM455 342h1v1h-1zM457 342h1v1h-1zM459 342h1v1h-1zM461 342h1v1h-1zM463 342h1v1h-1zM465 342h1v1h-1zM467 342h1v1h-1zM469 342h1v1h-1zM471 342h1v1h-1zM473 342h1v1h-1zM475 342h1v1h-1zM477 342h1v1h-1zM479 342h1v1h-1zM481 342h1v1h-1zM483 342h1v1h-1zM485 342h1v1h-1zM487 342h1v1h-1zM489 342h1v1h-1zM491 342h1v1h-1zM493 342h1v1h-1zM495 342h1v1h-1zM497 342h1v1h-1zM499 342h1v1h-1zM501 342h1v1h-1zM503 342h1v1h-1zM505 342h1v1h-1zM507 342h1v1h-1zM509 342h1v1h-1zM511 342h1v1h-1zM513 342h1v1h-1zM515 342h1v1h-1zM517 342h1v1h-1zM519 342h1v1h-1zM521 342h1v1h-1zM523 342h1v1h-1zM525 342h1v1h-1zM527 342h1v1h-1zM529 342h1v1h-1zM531 342h1v1h-1zM533 342h1v1h-1zM535 342h1v1h-1zM537 342h1v1h-1zM539 342h1v1h-1zM541 342h1v1h-1zM543 342h1v1h-1zM545 342h1v1h-1zM547 342h1v1h-1zM549 342h1v1h-1zM551 342h1v1h-1zM553 342h1v1h-1zM555 342h1v1h-1zM557 342h1v1h-1zM559 342h1v1h-1zM561 342h1v1h-1zM563 342h1v1h-1zM565 342h1v1h-1zM567 342h1v1h-1zM569 342h1v1h-1zM571 342h1v1h-1zM573 342h1v1h-1zM575 342h1v1h-1zM577 342h1v1h-1zM579 342h1v1h-1zM581 342h1v1h-1zM583 342h1v1h-1zM585 342h1v1h-1zM587 342h1v1h-1zM589 342h1v1h-1zM591 342h1v1h-1zM593 342h1v1h-1zM595 342h1v1h-1zM597 342h1v1h-1zM599 342h1v1h-1zM601 342h1v1h-1zM603 342h1v1h-1zM605 342h1v1h-1zM607 342h1v1h-1zM609 342h1v1h-1zM611 342h1v1h-1zM613 342h1v1h-1zM615 342h1v1h-1zM617 342h1v1h-1zM619 342h1v1h-1zM621 342h1v1h-1zM623 342h1v1h-1zM625 342h1v1h-1zM627 342h1v1h-1zM629 342h1v1h-1zM631 342h1v1h-1zM633 342h1v1h-1zM635 342h1v1h-1zM637 342h1v1h-1zM639 342h1v1h-1zM641 342h1v1h-1zM643 342h1v1h-1zM645 342h1v1h-1zM647 342h1v1h-1zM649 342h1v1h-1zM651 342h1v1h-1zM653 342h1v1h-1zM655 342h1v1h-1zM657 342h1v1h-1zM659 342h1v1h-1zM661 342h1v1h-1zM663 342h1v1h-1zM665 342h1v1h-1zM667 342h1v1h-1zM669 342h1v1h-1zM671 342h1v1h-1zM673 342h1v1h-1zM675 342h1v1h-1zM677 342h1v1h-1zM679 342h1v1h-1zM681 342h1v1h-1zM683 342h1v1h-1zM685 342h1v1h-1zM687 342h1v1h-1zM689 342h1v1h-1zM691 342h1v1h-1zM693 342h1v1h-1zM695 342h1v1h-1zM697 342h1v1h-1zM699 342h1v1h-1zM701 342h1v1h-1zM703 342h1v1h-1zM705 342h1v1h-1zM707 342h1v1h-1zM709 342h1v1h-1zM711 342h1v1h-1zM713 342h1v1h-1zM715 342h1v1h-1zM717 342h1v1h-1zM719 342h1v1h-1zM721 342h1v1h-1zM723 342h1v1h-1zM725 342h1v1h-1zM727 342h1v1h-1zM729 342h1v1h-1zM731 342h1v1h-1zM733 342h1v1h-1zM735 342h1v1h-1zM737 342h1v1h-1zM739 342h1v1h-1zM741 342h1v1h-1zM743 342h1v1h-1zM745 342h1v1h-1zM747 342h1v1h-1zM749 342h1v1h-1zM751 342h1v1h-1zM753 342h1v1h-1zM755 342h1v1h-1zM757 342h1v1h-1zM759 342h1v1h-1zM761 342h1v1h-1zM763 342h1v1h-1zM765 342h1v1h-1zM767 342h1v1h-1zM769 342h1v1h-1zM771 342h1v1h-1zM773 342h1v1h-1zM775 342h1v1h-1zM777 342h1v1h-1zM779 342h1v1h-1zM781 342h1v1h-1zM783 342h1v1h-1zM785 342h1v1h-1zM787 342h1v1h-1zM789 342h1v1h-1zM791 342h1v1h-1zM793 342h1v1h-1zM795 342h1v1h-1zM797 342h1v1h-1zM799 342h1v1h-1zM801 342h1v1h-1zM803 342h1v1h-1zM805 342h1v1h-1zM807 342h1v1h-1zM809 342h1v1h-1zM811 342h1v1h-1zM813 342h1v1h-1zM815 342h1v1h-1zM817 342h1v1h-1zM819 342h1v1h-1zM821 342h1v1h-1zM823 342h1v1h-1zM825 342h1v1h-1zM827 342h1v1h-1zM829 342h1v1h-1zM831 342h1v1h-1zM833 342h1v1h-1zM835 342h1v1h-1zM837 342h1v1h-1zM839 342h1v1h-1zM841 342h1v1h-1zM843 342h1v1h-1zM845 342h1v1h-1zM847 342h1v1h-1zM849 342h1v1h-1zM851 342h1v1h-1zM853 342h1v1h-1zM855 342h1v1h-1zM857 342h1v1h-1zM859 342h1v1h-1zM861 342h1v1h-1zM863 342h1v1h-1zM865 342h1v1h-1zM867 342h1v1h-1zM869 342h1v1h-1zM871 342h1v1h-1zM873 342h1v1h-1zM875 342h1v1h-1zM877 342h1v1h-1zM879 342h1v1h-1zM881 342h1v1h-1zM883 342h1v1h-1zM885 342h1v1h-1zM887 342h1v1h-1zM889 342h1v1h-1zM891 342h1v1h-1zM893 342h1v1h-1zM895 342h1v1h-1zM897 342h1v1h-1zM899 342h1v1h-1zM901 342h1v1h-1zM903 342h1v1h-1zM905 342h1v1h-1zM907 342h1v1h-1zM909 342h1v1h-1zM911 342h1v1h-1zM913 342h1v1h-1zM915 342h1v1h-1zM917 342h1v1h-1zM919 342h1v1h-1zM921 342h1v1h-1zM923 342h1v1h-1zM925 342h1v1h-1zM927 342h1v1h-1zM929 342h1v1h-1zM931 342h1v1h-1zM933 342h1v1h-1zM935 342h1v1h-1zM937 342h1v1h-1zM939 342h1v1h-1zM941 342h1v1h-1zM943 342h1v1h-1zM945 342h1v1h-1zM947 342h1v1h-1zM949 342h1v1h-1zM951 342h1v1h-1zM953 342h1v1h-1zM955 342h1v1h-1zM957 342h1v1h-1zM959 342h1v1h-1zM961 342h1v1h-1zM963 342h1v1h-1zM965 342h1v1h-1zM967 342h1v1h-1zM969 342h1v1h-1zM971 342h1v1h-1zM973 342h1v1h-1zM975 342h1v1h-1zM977 342h1v1h-1zM979 342h1v1h-1zM981 342h1v1h-1zM983 342h1v1h-1zM985 342h1v1h-1zM987 342h1v1h-1zM989 342h1v1h-1zM991 342h1v1h-1zM993 342h1v1h-1zM995 342h1v1h-1zM997 342h1v1h-1zM999 342h1v1h-1zM1001 342h1v1h-1zM1003 342h1v1h-1zM1005 342h1v1h-1zM1007 342h1v1h-1zM1009 342h1v1h-1zM1011 342h1v1h-1zM1013 342h1v1h-1zM1015 342h1v1h-1zM1017 342h1v1h-1zM1019 342h1v1h-1zM41 339h1v1h-1zM41 341h1v3h-1zM41 345h1v1h-1zM61 339h1v1h-1zM61 341h1v3h-1zM61 345h1v1h-1zM81 339h1v1h-1zM81 341h1v3h-1zM81 345h1v1h-1zM101 339h1v1h-1zM101 341h1v3h-1zM101 345h1v1h-1zM121 336h1v1h-1zM121 338h1v1h-1zM121 340h1v1h-1zM121 342h1v1h-1zM121 344h1v1h-1zM121 346h1v1h-1zM121 348h1v1h-1zM141 339h1v1h-1zM141 341h1v3h-1zM141 345h1v1h-1zM161 339h1v1h-1zM161 341h1v3h-1zM161 345h1v1h-1zM181 339h1v1h-1zM181 341h1v3h-1zM181 345h1v1h-1zM201 339h1v1h-1zM201 341h1v3h-1zM201 345h1v1h-1zM221 336h1v1h-1zM221 338h1v1h-1zM221 340h1v1h-1zM221 342h1v1h-1zM221 344h1v1h-1zM221 346h1v1h-1zM221 348h1v1h-1zM241 339h1v1h-1zM241 341h1v3h-1zM241 345h1v1h-1zM261 339h1v1h-1zM261 341h1v3h-1zM261 345h1v1h-1zM281 339h1v1h-1zM281 341h1v3h-1zM281 345h1v1h-1zM301 339h1v1h-1zM301 341h1v3h-1zM301 345h1v1h-1zM321 336h1v1h-1zM321 338h1v1h-1zM321 340h1v1h-1zM321 342h1v1h-1zM321 344h1v1h-1zM321 346h1v1h-1zM321 348h1v1h-1zM341 339h1v1h-1zM341 341h1v3h-1zM341 345h1v1h-1zM361 339h1v1h-1zM361 341h1v3h-1zM361 345h1v1h-1zM381 339h1v1h-1zM381 341h1v3h-1zM381 345h1v1h-1zM401 339h1v1h-1zM401 341h1v3h-1zM401 345h1v1h-1zM421 336h1v1h-1zM421 338h1v1h-1zM421 340h1v1h-1zM421 342h1v1h-1zM421 344h1v1h-1zM421 346h1v1h-1zM421 348h1v1h-1zM441 339h1v1h-1zM441 341h1v3h-1zM441 345h1v1h-1zM461 339h1v1h-1zM461 341h1v3h-1zM461 345h1v1h-1zM481 339h1v1h-1zM481 341h1v3h-1zM481 345h1v1h-1zM501 339h1v1h-1zM501 341h1v3h-1zM501 345h1v1h-1zM521 336h1v1h-1zM521 338h1v1h-1zM521 340h1v1h-1zM521 342h1v1h-1zM521 344h1v1h-1zM521 346h1v1h-1zM521 348h1v1h-1zM541 339h1v1h-1zM541 341h1v3h-1zM541 345h1v1h-1zM561 339h1v1h-1zM561 341h1v3h-1zM561 345h1v1h-1zM581 339h1v1h-1zM581 341h1v3h-1zM581 345h1v1h-1zM601 339h1v1h-1zM601 341h1v3h-1zM601 345h1v1h-1zM621 336h1v1h-1zM621 338h1v1h-1zM621 340h1v1h-1zM621 342h1v1h-1zM621 344h1v1h-1zM621 346h1v1h-1zM621 348h1v1h-1zM641 339h1v1h-1zM641 341h1v3h-1zM641 345h1v1h-1zM661 339h1v1h-1zM661 341h1v3h-1zM661 345h1v1h-1zM681 339h1v1h-1zM681 341h1v3h-1zM681 345h1v1h-1zM701 339h1v1h-1zM701 341h1v3h-1zM701 345h1v1h-1zM721 336h1v1h-1zM721 338h1v1h-1zM721 340h1v1h-1zM721 342h1v1h-1zM721 344h1v1h-1zM721 346h1v1h-1zM721 348h1v1h-1zM741 339h1v1h-1zM741 341h1v3h-1zM741 345h1v1h-1zM761 339h1v1h-1zM761 341h1v3h-1zM761 345h1v1h-1zM781 339h1v1h-1zM781 341h1v3h-1zM781 345h1v1h-1zM801 339h1v1h-1zM801 341h1v3h-1zM801 345h1v1h-1zM821 336h1v1h-1zM821 338h1v1h-1zM821 340h1v1h-1zM821 342h1v1h-1zM821 344h1v1h-1zM821 346h1v1h-1zM821 348h1v1h-1zM841 339h1v1h-1zM841 341h1v3h-1zM841 345h1v1h-1zM861 339h1v1h-1zM861 341h1v3h-1zM861 345h1v1h-1zM881 339h1v1h-1zM881 341h1v3h-1zM881 345h1v1h-1zM901 339h1v1h-1zM901 341h1v3h-1zM901 345h1v1h-1zM921 336h1v1h-1zM921 338h1v1h-1zM921 340h1v1h-1zM921 342h1v1h-1zM921 344h1v1h-1zM921 346h1v1h-1zM921 348h1v1h-1zM941 339h1v1h-1zM941 341h1v3h-1zM941 345h1v1h-1zM961 339h1v1h-1zM961 341h1v3h-1zM961 345h1v1h-1zM981 339h1v1h-1zM981 341h1v3h-1zM981 345h1v1h-1zM1001 339h1v1h-1zM1001 341h1v3h-1zM1001 345h1v1h-1zM521 18h1v1h-1zM521 20h1v1h-1zM521 22h1v1h-1zM521 24h1v1h-1zM521 26h1v1h-1zM521 28h1v1h-1zM521 30h1v1h-1zM521 32h1v1h-1zM521 34h1v1h-1zM521 36h1v1h-1zM521 38h1v1h-1zM521 40h1v1h-1zM521 42h1v1h-1zM521 44h1v1h-1zM521 46h1v1h-1zM521 48h1v1h-1zM521 50h1v1h-1zM521 52h1v1h-1zM521 54h1v1h-1zM521 56h1v1h-1zM521 58h1v1h-1zM521 60h1v1h-1zM521 62h1v1h-1zM521 64h1v1h-1zM521 66h1v1h-1zM521 68h1v1h-1zM521 70h1v1h-1zM521 72h1v1h-1zM521 74h1v1h-1zM521 76h1v1h-1zM521 78h1v1h-1zM521 80h1v1h-1zM521 82h1v1h-1zM521 84h1v1h-1zM521 86h1v1h-1zM521 88h1v1h-1zM521 90h1v1h-1zM521 92h1v1h-1zM521 94h1v1h-1zM521 96h1v1h-1zM521 98h1v1h-1zM521 100h1v1h-1zM521 102h1v1h-1zM521 104h1v1h-1zM521 106h1v1h-1zM521 108h1v1h-1zM521 110h1v1h-1zM521 112h1v1h-1zM521 114h1v1h-1zM521 116h1v1h-1zM521 118h1v1h-1zM521 120h1v1h-1zM521 122h1v1h-1zM521 124h1v1h-1zM521 126h1v1h-1zM521 128h1v1h-1zM521 130h1v1h-1zM521 132h1v1h-1zM521 134h1v1h-1zM521 136h1v1h-1zM521 138h1v1h-1zM521 140h1v1h-1zM521 142h1v1h-1zM521 144h1v1h-1zM521 146h1v1h-1zM521 148h1v1h-1zM521 150h1v1h-1zM521 152h1v1h-1zM521 154h1v1h-1zM521 156h1v1h-1zM521 158h1v1h-1zM521 160h1v1h-1zM521 162h1v1h-1zM521 164h1v1h-1zM521 166h1v1h-1zM521 168h1v1h-1zM521 170h1v1h-1zM521 172h1v1h-1zM521 174h1v1h-1zM521 176h1v1h-1zM521 178h1v1h-1zM521 180h1v1h-1zM521 182h1v1h-1zM521 184h1v1h-1zM521 186h1v1h-1zM521 188h1v1h-1zM521 190h1v1h-1zM521 192h1v1h-1zM521 194h1v1h-1zM521 196h1v1h-1zM521 198h1v1h-1zM521 200h1v1h-1zM521 202h1v1h-1zM521 204h1v1h-1zM521 206h1v1h-1zM521 208h1v1h-1zM521 210h1v1h-1zM521 212h1v1h-1zM521 214h1v1h-1zM521 216h1v1h-1zM521 218h1v1h-1zM521 220h1v1h-1zM521 222h1v1h-1zM521 224h1v1h-1zM521 226h1v1h-1zM521 228h1v1h-1zM521 230h1v1h-1zM521 232h1v1h-1zM521 234h1v1h-1zM521 236h1v1h-1zM521 238h1v1h-1zM521 240h1v1h-1zM521 242h1v1h-1zM521 244h1v1h-1zM521 246h1v1h-1zM521 248h1v1h-1zM521 250h1v1h-1zM521 252h1v1h-1zM521 254h1v1h-1zM521 256h1v1h-1zM521 258h1v1h-1zM521 260h1v1h-1zM521 262h1v1h-1zM521 264h1v1h-1zM521 266h1v1h-1zM521 268h1v1h-1zM521 270h1v1h-1zM521 272h1v1h-1zM521 274h1v1h-1zM521 276h1v1h-1zM521 278h1v1h-1zM521 280h1v1h-1zM521 282h1v1h-1zM521 284h1v1h-1zM521 286h1v1h-1zM521 288h1v1h-1zM521 290h1v1h-1zM521 292h1v1h-1zM521 294h1v1h-1zM521 296h1v1h-1zM521 298h1v1h-1zM521 300h1v1h-1zM521 302h1v1h-1zM521 304h1v1h-1zM521 306h1v1h-1zM521 308h1v1h-1zM521 310h1v1h-1zM521 312h1v1h-1zM521 314h1v1h-1zM521 316h1v1h-1zM521 318h1v1h-1zM521 320h1v1h-1zM521 322h1v1h-1zM521 324h1v1h-1zM521 326h1v1h-1zM521 328h1v1h-1zM521 330h1v1h-1zM521 332h1v1h-1zM521 334h1v1h-1zM521 336h1v1h-1zM521 338h1v1h-1zM521 340h1v1h-1zM521 342h1v1h-1zM521 344h1v1h-1zM521 346h1v1h-1zM521 348h1v1h-1zM521 350h1v1h-1zM521 352h1v1h-1zM521 354h1v1h-1zM521 356h1v1h-1zM521 358h1v1h-1zM521 360h1v1h-1zM521 362h1v1h-1zM521 364h1v1h-1zM521 366h1v1h-1zM521 368h1v1h-1zM521 370h1v1h-1zM521 372h1v1h-1zM521 374h1v1h-1zM521 376h1v1h-1zM521 378h1v1h-1zM521 380h1v1h-1zM521 382h1v1h-1zM521 384h1v1h-1zM521 386h1v1h-1zM521 388h1v1h-1zM521 390h1v1h-1zM521 392h1v1h-1zM521 394h1v1h-1zM521 396h1v1h-1zM521 398h1v1h-1zM521 400h1v1h-1zM521 402h1v1h-1zM521 404h1v1h-1zM521 406h1v1h-1zM521 408h1v1h-1zM521 410h1v1h-1zM521 412h1v1h-1zM521 414h1v1h-1zM521 416h1v1h-1zM521 418h1v1h-1zM521 420h1v1h-1zM521 422h1v1h-1zM521 424h1v1h-1zM521 426h1v1h-1zM521 428h1v1h-1zM521 430h1v1h-1zM521 432h1v1h-1zM521 434h1v1h-1zM521 436h1v1h-1zM521 438h1v1h-1zM521 440h1v1h-1zM521 442h1v1h-1zM521 444h1v1h-1zM521 446h1v1h-1zM521 448h1v1h-1zM521 450h1v1h-1zM521 452h1v1h-1zM521 454h1v1h-1zM521 456h1v1h-1zM521 458h1v1h-1zM521 460h1v1h-1zM521 462h1v1h-1zM521 464h1v1h-1zM521 466h1v1h-1zM521 468h1v1h-1zM521 470h1v1h-1zM521 472h1v1h-1zM521 474h1v1h-1zM521 476h1v1h-1zM521 478h1v1h-1zM521 480h1v1h-1zM521 482h1v1h-1zM521 484h1v1h-1zM521 486h1v1h-1zM521 488h1v1h-1zM521 490h1v1h-1zM521 492h1v1h-1zM521 494h1v1h-1zM521 496h1v1h-1zM521 498h1v1h-1zM521 500h1v1h-1zM521 502h1v1h-1zM521 504h1v1h-1zM521 506h1v1h-1zM521 508h1v1h-1zM521 510h1v1h-1zM521 512h1v1h-1zM521 514h1v1h-1zM521 516h1v1h-1zM521 518h1v1h-1zM521 520h1v1h-1zM521 522h1v1h-1zM521 524h1v1h-1zM521 526h1v1h-1zM521 528h1v1h-1zM521 530h1v1h-1zM521 532h1v1h-1zM521 534h1v1h-1zM521 536h1v1h-1zM521 538h1v1h-1zM521 540h1v1h-1zM521 542h1v1h-1zM521 544h1v1h-1zM521 546h1v1h-1zM521 548h1v1h-1zM521 550h1v1h-1zM521 552h1v1h-1zM521 554h1v1h-1zM521 556h1v1h-1zM521 558h1v1h-1zM521 560h1v1h-1zM521 562h1v1h-1zM521 564h1v1h-1zM521 566h1v1h-1zM521 568h1v1h-1zM521 570h1v1h-1zM521 572h1v1h-1zM521 574h1v1h-1zM521 576h1v1h-1zM521 578h1v1h-1zM521 580h1v1h-1zM521 582h1v1h-1zM521 584h1v1h-1zM521 586h1v1h-1zM521 588h1v1h-1zM521 590h1v1h-1zM521 592h1v1h-1zM521 594h1v1h-1zM521 596h1v1h-1zM521 598h1v1h-1zM521 600h1v1h-1zM521 602h1v1h-1zM521 604h1v1h-1zM521 606h1v1h-1zM521 608h1v1h-1zM521 610h1v1h-1zM521 612h1v1h-1zM521 614h1v1h-1zM521 616h1v1h-1zM521 618h1v1h-1zM521 620h1v1h-1zM521 622h1v1h-1zM521 624h1v1h-1zM521 626h1v1h-1zM521 628h1v1h-1zM521 630h1v1h-1zM521 632h1v1h-1zM521 634h1v1h-1zM521 636h1v1h-1zM521 638h1v1h-1zM521 640h1v1h-1zM521 642h1v1h-1zM521 644h1v1h-1zM521 646h1v1h-1zM521 648h1v1h-1zM521 650h1v1h-1zM521 652h1v1h-1zM521 654h1v1h-1zM521 656h1v1h-1zM521 658h1v1h-1zM521 660h1v1h-1zM521 662h1v1h-1zM521 664h1v1h-1zM521 666h1v1h-1zM518 30h1v1h-1zM520 30h3v1h-3zM524 30h1v1h-1zM518 43h1v1h-1zM520 43h3v1h-3zM524 43h1v1h-1zM518 56h1v1h-1zM520 56h3v1h-3zM524 56h1v1h-1zM518 69h1v1h-1zM520 69h3v1h-3zM524 69h1v1h-1zM515 82h1v1h-1zM517 82h1v1h-1zM519 82h1v1h-1zM521 82h1v1h-1zM523 82h1v1h-1zM525 82h1v1h-1zM527 82h1v1h-1zM518 95h1v1h-1zM520 95h3v1h-3zM524 95h1v1h-1zM518 108h1v1h-1zM520 108h3v1h-3zM524 108h1v1h-1zM518 121h1v1h-1zM520 121h3v1h-3zM524 121h1v1h-1zM518 134h1v1h-1zM520 134h3v1h-3zM524 134h1v1h-1zM515 147h1v1h-1zM517 147h1v1h-1zM519 147h1v1h-1zM521 147h1v1h-1zM523 147h1v1h-1zM525 147h1v1h-1zM527 147h1v1h-1zM518 160h1v1h-1zM520 160h3v1h-3zM524 160h1v1h-1zM518 173h1v1h-1zM520 173h3v1h-3zM524 173h1v1h-1zM518 186h1v1h-1zM520 186h3v1h-3zM524 186h1v1h-1zM518 199h1v1h-1zM520 199h3v1h-3zM524 199h1v1h-1zM515 212h1v1h-1zM517 212h1v1h-1zM519 212h1v1h-1zM521 212h1v1h-1zM523 212h1v1h-1zM525 212h1v1h-1zM527 212h1v1h-1zM518 225h1v1h-1zM520 225h3v1h-3zM524 225h1v1h-1zM518 238h1v1h-1zM520 238h3v1h-3zM524 238h1v1h-1zM518 251h1v1h-1zM520 251h3v1h-3zM524 251h1v1h-1zM518 264h1v1h-1zM520 264h3v1h-3zM524 264h1v1h-1zM515 277h1v1h-1zM517 277h1v1h-1zM519 277h1v1h-1zM521 277h1v1h-1zM523 277h1v1h-1zM525 277h1v1h-1zM527 277h1v1h-1zM518 290h1v1h-1zM520 290h3v1h-3zM524 290h1v1h-1zM518 303h1v1h-1zM520 303h3v1h-3zM524 303h1v1h-1zM518 316h1v1h-1zM520 316h3v1h-3zM524 316h1v1h-1zM518 329h1v1h-1zM520 329h3v1h-3zM524 329h1v1h-1zM515 342h1v1h-1zM517 342h1v1h-1zM519 342h1v1h-1zM521 342h1v1h-1zM523 342h1v1h-1zM525 342h1v1h-1zM527 342h1v1h-1zM518 355h1v1h-1zM520 355h3v1h-3zM524 355h1v1h-1zM518 368h1v1h-1zM520 368h3v1h-3zM524 368h1v1h-1zM518 381h1v1h-1zM520 381h3v1h-3zM524 381h1v1h-1zM518 394h1v1h-1zM520 394h3v1h-3zM524 394h1v1h-1zM515 407h1v1h-1zM517 407h1v1h-1zM519 407h1v1h-1zM521 407h1v1h-1zM523 407h1v1h-1zM525 407h1v1h-1zM527 407h1v1h-1zM518 420h1v1h-1zM520 420h3v1h-3zM524 420h1v1h-1zM518 433h1v1h-1zM520 433h3v1h-3zM524 433h1v1h-1zM518 446h1v1h-1zM520 446h3v1h-3zM524 446h1v1h-1zM518 459h1v1h-1zM520 459h3v1h-3zM524 459h1v1h-1zM515 472h1v1h-1zM517 472h1v1h-1zM519 472h1v1h-1zM521 472h1v1h-1zM523 472h1v1h-1zM525 472h1v1h-1zM527 472h1v1h-1zM518 485h1v1h-1zM520 485h3v1h-3zM524 485h1v1h-1zM518 498h1v1h-1zM520 498h3v1h-3zM524 498h1v1h-1zM518 511h1v1h-1zM520 511h3v1h-3zM524 511h1v1h-1zM518 524h1v1h-1zM520 524h3v1h-3zM524 524h1v1h-1zM515 537h1v1h-1zM517 537h1v1h-1zM519 537h1v1h-1zM521 537h1v1h-1zM523 537h1v1h-1zM525 537h1v1h-1zM527 537h1v1h-1zM518 550h1v1h-1zM520 550h3v1h-3zM524 550h1v1h-1zM518 563h1v1h-1zM520 563h3v1h-3zM524 563h1v1h-1zM518 576h1v1h-1zM520 576h3v1h-3zM524 576h1v1h-1zM518 589h1v1h-1zM520 589h3v1h-3zM524 589h1v1h-1zM515 602h1v1h-1zM517 602h1v1h-1zM519 602h1v1h-1zM521 602h1v1h-1zM523 602h1v1h-1zM525 602h1v1h-1zM527 602h1v1h-1zM518 615h1v1h-1zM520 615h3v1h-3zM524 615h1v1h-1zM518 628h1v1h-1zM520 628h3v1h-3zM524 628h1v1h-1zM518 641h1v1h-1zM520 641h3v1h-3zM524 641h1v1h-1zM518 654h1v1h-1zM520 654h3v1h-3zM524 654h1v1h-1zM41 17h1v1h-1zM41 19h1v1h-1zM41 667h1v1h-1zM41 665h1v1h-1zM61 17h1v1h-1zM61 19h1v1h-1zM61 667h1v1h-1zM61 665h1v1h-1zM81 17h1v1h-1zM81 19h1v1h-1zM81 667h1v1h-1zM81 665h1v1h-1zM101 17h1v1h-1zM101 19h1v1h-1zM101 667h1v1h-1zM101 665h1v1h-1zM121 18h1v1h-1zM121 20h1v1h-1zM121 22h1v1h-1zM121 666h1v1h-1zM121 664h1v1h-1zM121 662h1v1h-1zM141 17h1v1h-1zM141 19h1v1h-1zM141 667h1v1h-1zM141 665h1v1h-1zM161 17h1v1h-1zM161 19h1v1h-1zM161 667h1v1h-1zM161 665h1v1h-1zM181 17h1v1h-1zM181 19h1v1h-1zM181 667h1v1h-1zM181 665h1v1h-1zM201 17h1v1h-1zM201 19h1v1h-1zM201 667h1v1h-1zM201 665h1v1h-1zM221 18h1v1h-1zM221 20h1v1h-1zM221 22h1v1h-1zM221 666h1v1h-1zM221 664h1v1h-1zM221 662h1v1h-1zM241 17h1v1h-1zM241 19h1v1h-1zM241 667h1v1h-1zM241 665h1v1h-1zM261 17h1v1h-1zM261 19h1v1h-1zM261 667h1v1h-1zM261 665h1v1h-1zM281 17h1v1h-1zM281 19h1v1h-1zM281 667h1v1h-1zM281 665h1v1h-1zM301 17h1v1h-1zM301 19h1v1h-1zM301 667h1v1h-1zM301 665h1v1h-1zM321 18h1v1h-1zM321 20h1v1h-1zM321 22h1v1h-1zM321 666h1v1h-1zM321 664h1v1h-1zM321 662h1v1h-1zM341 17h1v1h-1zM341 19h1v1h-1zM341 667h1v1h-1zM341 665h1v1h-1zM361 17h1v1h-1zM361 19h1v1h-1zM361 667h1v1h-1zM361 665h1v1h-1zM381 17h1v1h-1zM381 19h1v1h-1zM381 667h1v1h-1zM381 665h1v1h-1zM401 17h1v1h-1zM401 19h1v1h-1zM401 667h1v1h-1zM401 665h1v1h-1zM421 18h1v1h-1zM421 20h1v1h-1zM421 22h1v1h-1zM421 666h1v1h-1zM421 664h1v1h-1zM421 662h1v1h-1zM441 17h1v1h-1zM441 19h1v1h-1zM441 667h1v1h-1zM441 665h1v1h-1zM461 17h1v1h-1zM461 19h1v1h-1zM461 667h1v1h-1zM461 665h1v1h-1zM481 17h1v1h-1zM481 19h1v1h-1zM481 667h1v1h-1zM481 665h1v1h-1zM501 17h1v1h-1zM501 19h1v1h-1zM501 667h1v1h-1zM501 665h1v1h-1zM521 18h1v1h-1zM521 20h1v1h-1zM521 22h1v1h-1zM521 666h1v1h-1zM521 664h1v1h-1zM521 662h1v1h-1zM541 17h1v1h-1zM541 19h1v1h-1zM541 667h1v1h-1zM541 665h1v1h-1zM561 17h1v1h-1zM561 19h1v1h-1zM561 667h1v1h-1zM561 665h1v1h-1zM581 17h1v1h-1zM581 19h1v1h-1zM581 667h1v1h-1zM581 665h1v1h-1zM601 17h1v1h-1zM601 19h1v1h-1zM601 667h1v1h-1zM601 665h1v1h-1zM621 18h1v1h-1zM621 20h1v1h-1zM621 22h1v1h-1zM621 666h1v1h-1zM621 664h1v1h-1zM621 662h1v1h-1zM641 17h1v1h-1zM641 19h1v1h-1zM641 667h1v1h-1zM641 665h1v1h-1zM661 17h1v1h-1zM661 19h1v1h-1zM661 667h1v1h-1zM661 665h1v1h-1zM681 17h1v1h-1zM681 19h1v1h-1zM681 667h1v1h-1zM681 665h1v1h-1zM701 17h1v1h-1zM701 19h1v1h-1zM701 667h1v1h-1zM701 665h1v1h-1zM721 18h1v1h-1zM721 20h1v1h-1zM721 22h1v1h-1zM721 666h1v1h-1zM721 664h1v1h-1zM721 662h1v1h-1zM741 17h1v1h-1zM741 19h1v1h-1zM741 667h1v1h-1zM741 665h1v1h-1zM761 17h1v1h-1zM761 19h1v1h-1zM761 667h1v1h-1zM761 665h1v1h-1zM781 17h1v1h-1zM781 19h1v1h-1zM781 667h1v1h-1zM781 665h1v1h-1zM801 17h1v1h-1zM801 19h1v1h-1zM801 667h1v1h-1zM801 665h1v1h-1zM821 18h1v1h-1zM821 20h1v1h-1zM821 22h1v1h-1zM821 666h1v1h-1zM821 664h1v1h-1zM821 662h1v1h-1zM841 17h1v1h-1zM841 19h1v1h-1zM841 667h1v1h-1zM841 665h1v1h-1zM861 17h1v1h-1zM861 19h1v1h-1zM861 667h1v1h-1zM861 665h1v1h-1zM881 17h1v1h-1zM881 19h1v1h-1zM881 667h1v1h-1zM881 665h1v1h-1zM901 17h1v1h-1zM901 19h1v1h-1zM901 667h1v1h-1zM901 665h1v1h-1zM921 18h1v1h-1zM921 20h1v1h-1zM921 22h1v1h-1zM921 666h1v1h-1zM921 664h1v1h-1zM921 662h1v1h-1zM941 17h1v1h-1zM941 19h1v1h-1zM941 667h1v1h-1zM941 665h1v1h-1zM961 17h1v1h-1zM961 19h1v1h-1zM961 667h1v1h-1zM961 665h1v1h-1zM981 17h1v1h-1zM981 19h1v1h-1zM981 667h1v1h-1zM981 665h1v1h-1zM1001 17h1v1h-1zM1001 19h1v1h-1zM1001 667h1v1h-1zM1001 665h1v1h-1zM21 30h1v1h-1zM23 30h1v1h-1zM1020 30h1v1h-1zM1018 30h1v1h-1zM21 43h1v1h-1zM23 43h1v1h-1zM1020 43h1v1h-1zM1018 43h1v1h-1zM21 56h1v1h-1zM23 56h1v1h-1zM1020 56h1v1h-1zM1018 56h1v1h-1zM21 69h1v1h-1zM23 69h1v1h-1zM1020 69h1v1h-1zM1018 69h1v1h-1zM22 82h1v1h-1zM24 82h1v1h-1zM26 82h1v1h-1zM1019 82h1v1h-1zM1017 82h1v1h-1zM1015 82h1v1h-1zM21 95h1v1h-1zM23 95h1v1h-1zM1020 95h1v1h-1zM1018 95h1v1h-1zM21 108h1v1h-1zM23 108h1v1h-1zM1020 108h1v1h-1zM1018 108h1v1h-1zM21 121h1v1h-1zM23 121h1v1h-1zM1020 121h1v1h-1zM1018 121h1v1h-1zM21 134h1v1h-1zM23 134h1v1h-1zM1020 134h1v1h-1zM1018 134h1v1h-1zM22 147h1v1h-1zM24 147h1v1h-1zM26 147h1v1h-1zM1019 147h1v1h-1zM1017 147h1v1h-1zM1015 147h1v1h-1zM21 160h1v1h-1zM23 160h1v1h-1zM1020 160h1v1h-1zM1018 160h1v1h-1zM21 173h1v1h-1zM23 173h1v1h-1zM1020 173h1v1h-1zM1018 173h1v1h-1zM21 186h1v1h-1zM23 186h1v1h-1zM1020 186h1v1h-1zM1018 186h1v1h-1zM21 199h1v1h-1zM23 199h1v1h-1zM1020 199h1v1h-1zM1018 199h1v1h-1zM22 212h1v1h-1zM24 212h1v1h-1zM26 212h1v1h-1zM1019 212h1v1h-1zM1017 212h1v1h-1zM1015 212h1v1h-1zM21 225h1v1h-1zM23 225h1v1h-1zM1020 225h1v1h-1zM1018 225h1v1h-1zM21 238h1v1h-1zM23 238h1v1h-1zM1020 238h1v1h-1zM1018 238h1v1h-1zM21 251h1v1h-1zM23 251h1v1h-1zM1020 251h1v1h-1zM1018 251h1v1h-1zM21 264h1v1h-1zM23 264h1v1h-1zM1020 264h1v1h-1zM1018 264h1v1h-1zM22 277h1v1h-1zM24 277h1v1h-1zM26 277h1v1h-1zM1019 277h1v1h-1zM1017 277h1v1h-1zM1015 277h1v1h-1zM21 290h1v1h-1zM23 290h1v1h-1zM1020 290h1v1h-1zM1018 290h1v1h-1zM21 303h1v1h-1zM23 303h1v1h-1zM1020 303h1v1h-1zM1018 303h1v1h-1zM21 316h1v1h-1zM23 316h1v1h-1zM1020 316h1v1h-1zM1018 316h1v1h-1zM21 329h1v1h-1zM23 329h1v1h-1zM1020 329h1v1h-1zM1018 329h1v1h-1zM22 342h1v1h-1zM24 342h1v1h-1zM26 342h1v1h-1zM1019 342h1v1h-1zM1017 342h1v1h-1zM1015 342h1v1h-1zM21 355h1v1h-1zM23 355h1v1h-1zM1020 355h1v1h-1zM1018 355h1v1h-1zM21 368h1v1h-1zM23 368h1v1h-1zM1020 368h1v1h-1zM1018 368h1v1h-1zM21 381h1v1h-1zM23 381h1v1h-1zM1020 381h1v1h-1zM1018 381h1v1h-1zM21 394h1v1h-1zM23 394h1v1h-1zM1020 394h1v1h-1zM1018 394h1v1h-1zM22 407h1v1h-1zM24 407h1v1h-1zM26 407h1v1h-1zM1019 407h1v1h-1zM1017 407h1v1h-1zM1015 407h1v1h-1zM21 420h1v1h-1zM23 420h1v1h-1zM1020 420h1v1h-1zM1018 420h1v1h-1zM21 433h1v1h-1zM23 433h1v1h-1zM1020 433h1v1h-1zM1018 433h1v1h-1zM21 446h1v1h-1zM23 446h1v1h-1zM1020 446h1v1h-1zM1018 446h1v1h-1zM21 459h1v1h-1zM23 459h1v1h-1zM1020 459h1v1h-1zM1018 459h1v1h-1zM22 472h1v1h-1zM24 472h1v1h-1zM26 472h1v1h-1zM1019 472h1v1h-1zM1017 472h1v1h-1zM1015 472h1v1h-1zM21 485h1v1h-1zM23 485h1v1h-1zM1020 485h1v1h-1zM1018 485h1v1h-1zM21 498h1v1h-1zM23 498h1v1h-1zM1020 498h1v1h-1zM1018 498h1v1h-1zM21 511h1v1h-1zM23 511h1v1h-1zM1020 511h1v1h-1zM1018 511h1v1h-1zM21 524h1v1h-1zM23 524h1v1h-1zM1020 524h1v1h-1zM1018 524h1v1h-1zM22 537h1v1h-1zM24 537h1v1h-1zM26 537h1v1h-1zM1019 537h1v1h-1zM1017 537h1v1h-1zM1015 537h1v1h-1zM21 550h1v1h-1zM23 550h1v1h-1zM1020 550h1v1h-1zM1018 550h1v1h-1zM21 563h1v1h-1zM23 563h1v1h-1zM1020 563h1v1h-1zM1018 563h1v1h-1zM21 576h1v1h-1zM23 576h1v1h-1zM1020 576h1v1h-1zM1018 576h1v1h-1zM21 589h1v1h-1zM23 589h1v1h-1zM1020 589h1v1h-1zM1018 589h1v1h-1zM22 602h1v1h-1zM24 602h1v1h-1zM26 602h1v1h-1zM1019 602h1v1h-1zM1017 602h1v1h-1zM1015 602h1v1h-1zM21 615h1v1h-1zM23 615h1v1h-1zM1020 615h1v1h-1zM1018 615h1v1h-1zM21 628h1v1h-1zM23 628h1v1h-1zM1020 628h1v1h-1zM1018 628h1v1h-1zM21 641h1v1h-1zM23 641h1v1h-1zM1020 641h1v1h-1zM1018 641h1v1h-1zM21 654h1v1h-1zM23 654h1v1h-1zM1020 654h1v1h-1zM1018 654h1v1h-1z"/>
<rect x="22" y="250" width="46" height="17" fill="#000"/><rect x="22" y="433" width="27" height="17" fill="#000"/><rect x="22" y="632" width="43" height="17" fill="#000"/><path d="M0.5 250.5h12.7l6.6 8l-6.6 8h-12.7z" fill="#000400" stroke="#f8f800" stroke-width="1" shape-rendering="geometricPrecision"/><path d="M0.5 433.5h12.7l6.6 8l-6.6 8h-12.7z" fill="#000400" stroke="#00f0f4" stroke-width="1" shape-rendering="geometricPrecision"/><path d="M0 632h13l6.6 8.3l-6.6 8.3h-13z" fill="#08a408" shape-rendering="geometricPrecision"/><path d="M0 632.5h13" stroke="#c8e0c8" stroke-width="1"/><path d="M1 648.5h12l6.4 -8" stroke="#000" stroke-width="1.2" fill="none" shape-rendering="geometricPrecision"/><path d="M1010 156.5l6 -6v12z" fill="#f8f800" shape-rendering="geometricPrecision"/><rect x="1016" y="156" width="5" height="1" fill="#f8f800"/><path d="M518 1h7.4l-3.7 4z" fill="#ffa000" shape-rendering="geometricPrecision"/><rect x="516" y="5" width="8.2" height="10.8" rx="1.5" fill="#ffa000" shape-rendering="geometricPrecision"/><path d="M518 6h5.4v1.6h-1.6v7h-2.2v-7h-1.6z" fill="#000" shape-rendering="geometricPrecision"/><path d="M516 17h11.2l-5.6 5.6z" fill="#ffa000" shape-rendering="geometricPrecision"/><path d="M515 23.8h10.2q1 0 1 1v10.4l-6.1 3.9l-6.1 -3.9v-10.4q0 -1 1 -1z" fill="#ffa000" shape-rendering="geometricPrecision"/><path d="M515 24.7h10.6v1.9h-4.2v9.1h-2.4v-9.1h-4z" fill="#000" shape-rendering="geometricPrecision"/>
</svg>
<div id="ov"><div class="t" style="left:-1px;top:-4px;font-family:'Liberation Serif',serif;font-weight:bold;font-size:21px;line-height:24px;color:#000;letter-spacing:-0.5px;-webkit-text-stroke:0.3px #000">Tek</div>
<div class="t" style="left:34px;top:-1px;font-size:14px;line-height:18px;color:#fff;letter-spacing:1.2px;-webkit-text-stroke:0.35px #fff">Stop</div>
<div class="t mk" style="left:1px;top:251px;color:#f8f800">1</div>
<div class="t mk" style="left:1px;top:434px;color:#00f0f4">2</div>
<div class="t mk" style="left:1px;top:633px;color:#000">4</div>
<div class="t" style="left:24px;top:251px">VDIM</div>
<div class="t" style="left:23px;top:434px;letter-spacing:0.5px">SW</div>
<div class="t" style="left:24px;top:633px">IOUT</div>
<div class="box" style="left:20px;top:670px;width:555px;height:21px"></div>
<div class="pill" style="left:26px;top:673px;background:#ffff00">1</div>
<div class="t r" style="left:68px;top:676px;color:#f8f800">2.00 V</div>
<div class="t" style="left:143px;top:673px;color:#f8f800;font-size:10.5px;font-family:'Liberation Sans',sans-serif;letter-spacing:0;line-height:10px;transform:scaleX(0.72);transform-origin:0 0">B</div><div class="t" style="left:147px;top:678px;color:#f8f800;font-size:10px;font-family:'Liberation Sans',sans-serif;letter-spacing:0;line-height:10px;transform:scaleX(0.72);transform-origin:0 0">W</div>
<div class="pill" style="left:165px;top:673px;background:#00f0f4">2</div>
<div class="t r" style="left:207px;top:676px;color:#00f0f4">5.00 V</div>
<div class="t" style="left:282px;top:673px;color:#00f0f4;font-size:10.5px;font-family:'Liberation Sans',sans-serif;letter-spacing:0;line-height:10px;transform:scaleX(0.72);transform-origin:0 0">B</div><div class="t" style="left:286px;top:678px;color:#00f0f4;font-size:10px;font-family:'Liberation Sans',sans-serif;letter-spacing:0;line-height:10px;transform:scaleX(0.72);transform-origin:0 0">W</div>
<div class="pill" style="left:443px;top:673px;background:#08a808">4</div>
<div class="t r" style="left:473px;top:676px;color:#08b008">↓200mA</div>
<div class="t" style="left:561px;top:673px;color:#08b008;font-size:10.5px;font-family:'Liberation Sans',sans-serif;letter-spacing:0;line-height:10px;transform:scaleX(0.72);transform-origin:0 0">B</div><div class="t" style="left:565px;top:678px;color:#08b008;font-size:10px;font-family:'Liberation Sans',sans-serif;letter-spacing:0;line-height:10px;transform:scaleX(0.72);transform-origin:0 0">W</div>
<div class="box" style="left:584px;top:670px;width:149px;height:38px"></div>
<div class="t r" style="left:589px;top:676px">4.00ms</div>
<div class="abs" style="left:589px;top:691px;width:12px;height:13px;background:#ffa000;border-radius:2px"></div>
<svg class="abs" style="left:589px;top:691px" width="36" height="13" viewBox="0 0 36 13"><path d="M1 1.2h10v1.8h-3.7v9h-2.6v-9h-3.7z" fill="#000"/><path d="M13 5.5h5v-2.5l4 3.2l-4 3.3v-2.5h-5z" fill="#ffa000"/><path d="M22.8 3h11.4l-5.7 6.2z" fill="#ffa000"/></svg>
<div class="t r" style="left:624px;top:693px;color:#ffa000">52.0000µs</div>
<div class="box" style="left:741px;top:670px;width:107px;height:38px"></div>
<div class="t r" style="left:747px;top:676px">250MS/s</div>
<div class="t r" style="left:747px;top:693px">10M points</div>
<div class="box" style="left:857px;top:670px;width:165px;height:38px"></div>
<div class="pill" style="left:889px;top:673px;background:#ffff00">1</div>
<svg class="abs" style="left:927px;top:674px" width="14" height="13" viewBox="0 0 14 13"><path d="M1 11h4l3 -9h5" fill="none" stroke="#fff" stroke-width="2"/></svg>
<div class="t r" style="left:962px;top:676px">3.12 V</div>
<div class="box" style="left:909px;top:729px;width:113px;height:37px"></div>
<div class="t r" style="left:925px;top:736px">3 Nov 2022</div>
<div class="t r" style="left:916px;top:752px">16:54:57</div>
<div class="btn" style="left:20px;padding-top:9px"><span>Utility Page</span><span><b class="hl">Config</b></span></div>
<div class="btn" style="left:138px;padding-top:9px"><span>Language</span><span><b class="hl">English</b></span></div>
<div class="btn" style="left:256px;padding-top:9px"><span>Set Date</span><span>&amp; Time</span></div>
<div class="btn" style="left:374px;padding-top:0px"><span>TekSecure</span><span>Erase</span><span>Memory</span></div>
<div class="btn" style="left:492px;padding-top:17px"><span>About</span></div>
<div class="btn" style="left:610px;padding-top:0px"><span>Application</span><span>Module</span><span>Licenses</span></div></div>
</body></html>
